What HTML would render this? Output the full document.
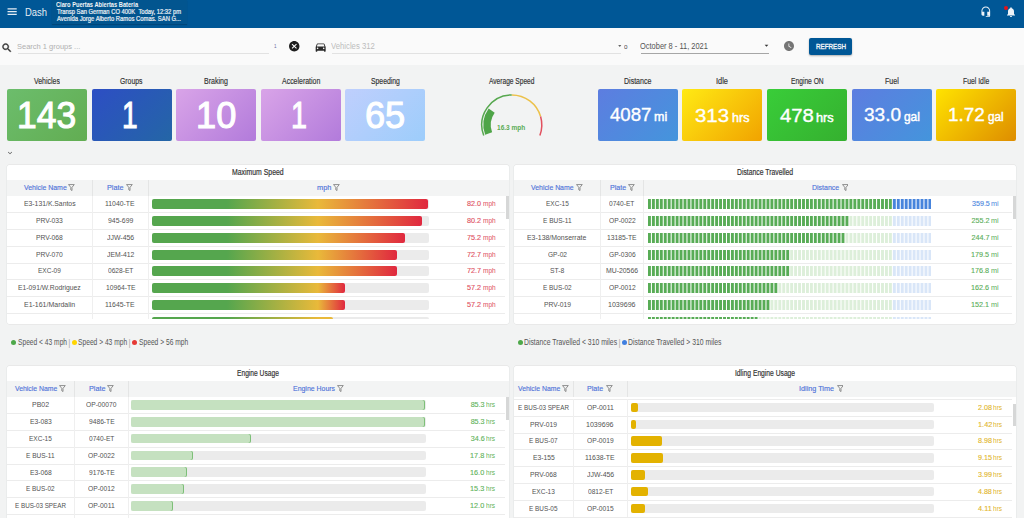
<!DOCTYPE html>
<html><head><meta charset="utf-8"><title>Dash</title>
<style>
html,body{margin:0;padding:0;}
body{width:1024px;height:518px;overflow:hidden;position:relative;background:#f2f3f3;font-family:"Liberation Sans", sans-serif;}
.t{position:absolute;white-space:nowrap;}
.panel{position:absolute;background:#fff;box-shadow:0 0 0.6px 0.4px #dfe0e0;border-radius:2px;overflow:hidden;}
.pa{position:absolute;}
</style></head><body>

<div style="position:absolute;left:0.00px;top:0.00px;width:1024.00px;height:27.60px;background:#005796;"></div>
<svg style="position:absolute;left:6.47px;top:5.1px;width:12.27px;height:13.2px;" viewBox="0 0 24 24" preserveAspectRatio="none"><path fill="#e4ecf3" d="M3 18h18v-2H3v2zm0-5h18v-2H3v2zm0-7v2h18V6H3z"/></svg>
<div class="t" style="left:24.54px;top:7.000px;font-size:10.7px;line-height:10.7px;color:#e4ecf3;transform:scaleX(0.8834);transform-origin:0 0;">Dash</div>
<div style="position:absolute;left:52.00px;top:0.00px;width:135.00px;height:24.20px;background:#02558f;box-shadow:0 1px 1px rgba(0,0,0,0.18);"></div>
<div class="t" style="left:56.47px;top:2.000px;font-size:6.9px;line-height:6.9px;color:#f2f5f8;font-weight:bold;transform:scaleX(0.8264);transform-origin:0 0;">Claro Puertas Abiertas Bateria</div>
<div class="t" style="left:56.58px;top:9.000px;font-size:6.6px;line-height:6.6px;color:#e8eef4;transform:scaleX(0.8839);transform-origin:0 0;-webkit-text-stroke:0.22px #e8eef4;">Transp San German CO 400K&nbsp;&nbsp;Today, 12:32 pm</div>
<div class="t" style="left:56.70px;top:16.000px;font-size:6.6px;line-height:6.6px;color:#e8eef4;transform:scaleX(0.8883);transform-origin:0 0;-webkit-text-stroke:0.22px #e8eef4;">Avenida Jorge Alberto Ramos Comas. SAN G...</div>
<svg style="position:absolute;left:979.80px;top:5.60px;width:11.60px;height:11.60px;" viewBox="0 0 24 24"><path fill="#eef3f8" d="M12 1c-4.97 0-9 4.03-9 9v7c0 1.66 1.34 3 3 3h3v-8H5v-2c0-3.87 3.13-7 7-7s7 3.13 7 7v2h-4v8h4v1h-7v2h6c1.66 0 3-1.34 3-3V10c0-4.97-4.03-9-9-9z"/></svg>
<svg style="position:absolute;left:1005.00px;top:5.90px;width:12.00px;height:12.00px;" viewBox="0 0 24 24"><path fill="#eef3f8" d="M12 22c1.1 0 2-.9 2-2h-4c0 1.1.89 2 2 2zm6-6v-5c0-3.07-1.64-5.64-4.5-6.32V4c0-.83-.67-1.5-1.5-1.5s-1.5.67-1.5 1.5v.68C7.63 5.36 6 7.92 6 11v5l-2 2v1h16v-1l-2-2z"/></svg>
<div style="position:absolute;left:1004.1px;top:5.7px;width:4.3px;height:4.3px;border-radius:50%;background:#e3131b;"></div>
<div style="position:absolute;left:0.00px;top:27.60px;width:1024.00px;height:37.20px;background:#fafafa;"></div>
<svg style="position:absolute;left:1.3px;top:42.0px;width:11.7px;height:11.7px;" viewBox="0 0 24 24"><path fill="#333" stroke="#333" stroke-width="0.9" d="M15.5 14h-.79l-.28-.27C15.41 12.59 16 11.11 16 9.5 16 5.91 13.09 3 9.5 3S3 5.91 3 9.5 5.91 16 9.5 16c1.61 0 3.09-.59 4.230-1.57l.27.28v.79l5 4.99L20.49 19l-4.99-5zm-6 0C7.01 14 5 11.99 5 9.5S7.01 5 9.5 5 14 7.01 14 9.5 11.99 14 9.5 14z"/></svg>
<div class="t" style="left:17.41px;top:43.000px;font-size:8.0px;line-height:8.0px;color:#b0b0b0;transform:scaleX(0.9364);transform-origin:0 0;">Search 1 groups ...</div>
<div style="position:absolute;left:17.75px;top:52.60px;width:251.00px;height:0.80px;background:#e2e2e2;"></div>
<div class="t" style="left:273.66px;top:44.000px;font-size:5.5px;line-height:5.5px;color:#6a6fa0;transform:scaleX(0.8359);transform-origin:0 0;">1</div>
<svg style="position:absolute;left:288.00px;top:40.00px;width:12.50px;height:12.50px;" viewBox="0 0 24 24"><path fill="#1e1e1e" d="M12 2C6.47 2 2 6.47 2 12s4.47 10 10 10 10-4.47 10-10S17.53 2 12 2zm5 13.59L15.59 17 12 13.41 8.41 17 7 15.59 10.59 12 7 8.41 8.41 7 12 10.59 15.59 7 17 8.41 13.41 12 17 15.59z"/></svg>
<svg style="position:absolute;left:314.3px;top:41.2px;width:13.33px;height:12.2px;" viewBox="0 0 24 24" preserveAspectRatio="none"><path fill="#2a2a2a" d="M18.92 6.01C18.72 5.42 18.16 5 17.5 5h-11c-.66 0-1.21.42-1.42 1.01L3 12v8c0 .55.45 1 1 1h1c.55 0 1-.45 1-1v-1h12v1c0 .55.45 1 1 1h1c.55 0 1-.45 1-1v-8l-2.08-5.99zM6.5 16c-.83 0-1.5-.67-1.5-1.5S5.67 13 6.5 13s1.5.67 1.5 1.5S7.33 16 6.5 16zm11 0c-.83 0-1.5-.67-1.5-1.5s.67-1.5 1.5-1.5 1.5.67 1.5 1.5-.67 1.5-1.5 1.5zM5 11l1.5-4.5h11L19 11H5z"/></svg>
<div class="t" style="left:331.46px;top:42.000px;font-size:8.4px;line-height:8.4px;color:#bdbdbd;transform:scaleX(0.9223);transform-origin:0 0;">Vehicles 312</div>
<div style="position:absolute;left:331.50px;top:52.60px;width:289.50px;height:0.80px;background:#e2e2e2;"></div>
<svg style="position:absolute;left:616.10px;top:41.90px;width:7.50px;height:7.50px;" viewBox="0 0 24 24"><path fill="#333" d="M7 10l5 5 5-5z"/></svg>
<div class="t" style="left:623.75px;top:44.000px;font-size:6.0px;line-height:6.0px;color:#444;transform:scaleX(1.0417);transform-origin:0 0;">0</div>
<div class="t" style="left:640.26px;top:42.000px;font-size:8.4px;line-height:8.4px;color:#555;transform:scaleX(0.8910);transform-origin:0 0;">October 8 - 11, 2021</div>
<div style="position:absolute;left:641.00px;top:52.50px;width:127.60px;height:1.30px;background:#a6a6a6;"></div>
<svg style="position:absolute;left:762.40px;top:41.25px;width:9.00px;height:9.00px;" viewBox="0 0 24 24"><path fill="#333" d="M7 10l5 5 5-5z"/></svg>
<svg style="position:absolute;left:783.00px;top:40.00px;width:12.00px;height:12.00px;" viewBox="0 0 24 24"><path fill="#757575" d="M12 2C6.5 2 2 6.5 2 12s4.5 10 10 10 10-4.5 10-10S17.5 2 12 2zm4.2 14.2L11 13V7h1.5v5.2l4.5 2.7-.8 1.3z"/></svg>
<div style="position:absolute;left:809.25px;top:37.75px;width:42.5px;height:17px;background:#005796;border-radius:2px;box-shadow:0 1px 2px rgba(0,0,0,0.3);"></div>
<div class="t" style="left:815.50px;top:43.000px;font-size:7.2px;line-height:7.2px;color:#f0f4f8;transform:scaleX(0.8728);transform-origin:0 0;-webkit-text-stroke:0.35px #f0f4f8;">REFRESH</div>
<div class="t" style="left:34.16px;top:77.000px;font-size:8.3px;line-height:8.3px;color:#333;transform:scaleX(0.8374);transform-origin:0 0;-webkit-text-stroke:0.16px #333;">Vehicles</div>
<div style="position:absolute;left:7.00px;top:88.6px;width:80.0px;height:52.6px;background:linear-gradient(135deg,#6cbd6c,#62ad52);border-radius:2px;"></div>
<div class="t" style="left:17.14px;top:97.000px;font-size:37.5px;line-height:37.5px;color:#ffffff;transform:scaleX(0.9445);transform-origin:0 0;-webkit-text-stroke:1.1px #fff;">143</div>
<div class="t" style="left:120.30px;top:77.000px;font-size:8.3px;line-height:8.3px;color:#333;transform:scaleX(0.8247);transform-origin:0 0;-webkit-text-stroke:0.16px #333;">Groups</div>
<div style="position:absolute;left:91.58px;top:88.6px;width:80.0px;height:52.6px;background:linear-gradient(135deg,#2d4ec4,#2466a6);border-radius:2px;"></div>
<div class="t" style="left:121.70px;top:97.000px;font-size:37.5px;line-height:37.5px;color:#ffffff;transform:scaleX(0.7479);transform-origin:0 0;-webkit-text-stroke:1.1px #fff;">1</div>
<div class="t" style="left:204.15px;top:77.000px;font-size:8.3px;line-height:8.3px;color:#333;transform:scaleX(0.8498);transform-origin:0 0;-webkit-text-stroke:0.16px #333;">Braking</div>
<div style="position:absolute;left:176.16px;top:88.6px;width:80.0px;height:52.6px;background:linear-gradient(135deg,#d9a4e8,#b27bdb);border-radius:2px;"></div>
<div class="t" style="left:195.59px;top:97.000px;font-size:37.5px;line-height:37.5px;color:#ffffff;transform:scaleX(0.9653);transform-origin:0 0;-webkit-text-stroke:1.1px #fff;">10</div>
<div class="t" style="left:281.81px;top:77.000px;font-size:8.3px;line-height:8.3px;color:#333;transform:scaleX(0.8393);transform-origin:0 0;-webkit-text-stroke:0.16px #333;">Acceleration</div>
<div style="position:absolute;left:260.74px;top:88.6px;width:80.0px;height:52.6px;background:linear-gradient(135deg,#d9a4e8,#b27bdb);border-radius:2px;"></div>
<div class="t" style="left:290.94px;top:97.000px;font-size:37.5px;line-height:37.5px;color:#ffffff;transform:scaleX(0.7663);transform-origin:0 0;-webkit-text-stroke:1.1px #fff;">1</div>
<div class="t" style="left:370.97px;top:77.000px;font-size:8.3px;line-height:8.3px;color:#333;transform:scaleX(0.8220);transform-origin:0 0;-webkit-text-stroke:0.16px #333;">Speeding</div>
<div style="position:absolute;left:345.32px;top:88.6px;width:80.0px;height:52.6px;background:linear-gradient(135deg,#bfcffd,#9dcdfb);border-radius:2px;"></div>
<div class="t" style="left:364.79px;top:97.000px;font-size:37.5px;line-height:37.5px;color:#ffffff;transform:scaleX(0.9647);transform-origin:0 0;-webkit-text-stroke:1.1px #fff;">65</div>
<div class="t" style="left:624.12px;top:77.000px;font-size:8.3px;line-height:8.3px;color:#333;transform:scaleX(0.8458);transform-origin:0 0;-webkit-text-stroke:0.16px #333;">Distance</div>
<div style="position:absolute;left:597.90px;top:88.6px;width:80.0px;height:52.6px;background:linear-gradient(135deg,#5d7de0,#4495dc);border-radius:2px;"></div>
<div class="t" style="left:610.03px;top:106.000px;font-size:18.5px;line-height:18.5px;color:#fff;transform:scaleX(1.0083);transform-origin:0 0;-webkit-text-stroke:0.35px #fff;">4087</div>
<div class="t" style="left:653.69px;top:111.000px;font-size:12.2px;line-height:12.2px;color:#fff;transform:scaleX(1.0235);transform-origin:0 0;-webkit-text-stroke:0.45px #fff;">mi</div>
<div class="t" style="left:716.35px;top:77.000px;font-size:8.3px;line-height:8.3px;color:#333;transform:scaleX(0.8920);transform-origin:0 0;-webkit-text-stroke:0.16px #333;">Idle</div>
<div style="position:absolute;left:682.48px;top:88.6px;width:80.0px;height:52.6px;background:linear-gradient(135deg,#ffea14,#f1a300);border-radius:2px;"></div>
<div class="t" style="left:695.38px;top:107.000px;font-size:18.5px;line-height:18.5px;color:#fff;transform:scaleX(1.1050);transform-origin:0 0;-webkit-text-stroke:0.35px #fff;">313</div>
<div class="t" style="left:731.82px;top:112.000px;font-size:12.2px;line-height:12.2px;color:#fff;transform:scaleX(1.0270);transform-origin:0 0;-webkit-text-stroke:0.45px #fff;">hrs</div>
<div class="t" style="left:790.71px;top:77.000px;font-size:8.3px;line-height:8.3px;color:#333;transform:scaleX(0.8057);transform-origin:0 0;-webkit-text-stroke:0.16px #333;">Engine ON</div>
<div style="position:absolute;left:767.06px;top:88.6px;width:80.0px;height:52.6px;background:linear-gradient(135deg,#39cd39,#35b02f);border-radius:2px;"></div>
<div class="t" style="left:780.39px;top:107.000px;font-size:18.5px;line-height:18.5px;color:#fff;transform:scaleX(1.0979);transform-origin:0 0;-webkit-text-stroke:0.35px #fff;">478</div>
<div class="t" style="left:816.01px;top:112.000px;font-size:12.2px;line-height:12.2px;color:#fff;transform:scaleX(1.0461);transform-origin:0 0;-webkit-text-stroke:0.45px #fff;">hrs</div>
<div class="t" style="left:884.70px;top:77.000px;font-size:8.3px;line-height:8.3px;color:#333;transform:scaleX(0.8532);transform-origin:0 0;-webkit-text-stroke:0.16px #333;">Fuel</div>
<div style="position:absolute;left:851.64px;top:88.6px;width:80.0px;height:52.6px;background:linear-gradient(135deg,#5d7de0,#4495dc);border-radius:2px;"></div>
<div class="t" style="left:863.84px;top:106.000px;font-size:18.5px;line-height:18.5px;color:#fff;transform:scaleX(1.0319);transform-origin:0 0;-webkit-text-stroke:0.35px #fff;">33.0</div>
<div class="t" style="left:904.02px;top:111.000px;font-size:12.2px;line-height:12.2px;color:#fff;transform:scaleX(0.9769);transform-origin:0 0;-webkit-text-stroke:0.45px #fff;">gal</div>
<div class="t" style="left:963.00px;top:77.000px;font-size:8.3px;line-height:8.3px;color:#333;transform:scaleX(0.8233);transform-origin:0 0;-webkit-text-stroke:0.16px #333;">Fuel Idle</div>
<div style="position:absolute;left:936.22px;top:88.6px;width:80.0px;height:52.6px;background:linear-gradient(135deg,#ffe300,#de8d00);border-radius:2px;"></div>
<div class="t" style="left:948.18px;top:106.000px;font-size:18.5px;line-height:18.5px;color:#fff;transform:scaleX(1.0217);transform-origin:0 0;-webkit-text-stroke:0.35px #fff;">1.72</div>
<div class="t" style="left:987.73px;top:111.000px;font-size:12.2px;line-height:12.2px;color:#fff;transform:scaleX(0.9635);transform-origin:0 0;-webkit-text-stroke:0.45px #fff;">gal</div>
<div class="t" style="left:489.00px;top:77.000px;font-size:8.3px;line-height:8.3px;color:#333;transform:scaleX(0.7961);transform-origin:0 0;-webkit-text-stroke:0.16px #333;">Average Speed</div>
<svg style="position:absolute;left:0;top:0;width:1024px;height:518px;" viewBox="0 0 1024 518"><path d="M483.74,135.50 A30.0,30.0 0 0 1 511.80,94.90" stroke="#57a84f" stroke-width="1.5" fill="none"/><path d="M511.80,94.90 A30.0,30.0 0 0 1 540.59,116.48" stroke="#ecc14a" stroke-width="1.5" fill="none"/><path d="M540.59,116.48 A30.0,30.0 0 0 1 539.86,135.50" stroke="#e2505e" stroke-width="1.5" fill="none"/><path d="M485.15,134.71 A28.4,28.4 0 0 1 488.68,108.41 L494.70,112.71 A21.0,21.0 0 0 0 492.09,132.15 Z" fill="#4fa548"/></svg>
<div class="t" style="left:497.11px;top:124.000px;font-size:7.0px;line-height:7.0px;color:#5aac55;font-weight:bold;transform:scaleX(0.9320);transform-origin:0 0;">16.3 mph</div>
<svg style="position:absolute;left:6.40px;top:148.50px;width:8.00px;height:8.00px;" viewBox="0 0 24 24"><path fill="#444" d="M16.59 8.59L12 13.17 7.41 8.59 6 10l6 6 6-6z"/></svg>
<div class="panel" style="left:7.20px;top:164.70px;width:501.80px;height:159.10px;">
<div class="t" style="left:225.05px;top:3.300px;font-size:8.3px;line-height:8.3px;color:#333;transform:scaleX(0.8289);transform-origin:0 0;-webkit-text-stroke:0.18px #333;">Maximum Speed</div><div style="position:absolute;left:0.00px;top:15.30px;width:501.80px;height:15.80px;background:#f3f4f4;"></div><div style="position:absolute;left:84.80px;top:15.30px;width:1.00px;height:15.80px;background:#e4e5e5;"></div><div style="position:absolute;left:140.70px;top:15.30px;width:1.00px;height:15.80px;background:#e4e5e5;"></div><div class="t" style="left:16.57px;top:19.300px;font-size:7.8px;line-height:7.8px;color:#4f73d9;transform:scaleX(0.8882);transform-origin:0 0;-webkit-text-stroke:0.15px #4f73d9;">Vehicle Name</div><svg class="pa" style="left:61.10px;top:19.60px;width:6.8px;height:7.2px;" viewBox="0 0 14 15"><path d="M1 1.2 H13 L8.3 7 V13.6 L5.7 12 V7 Z" fill="none" stroke="#7a7a7a" stroke-width="1.7" stroke-linejoin="round"/></svg><div class="t" style="left:100.22px;top:19.300px;font-size:7.8px;line-height:7.8px;color:#4f73d9;transform:scaleX(0.9281);transform-origin:0 0;-webkit-text-stroke:0.15px #4f73d9;">Plate</div><svg class="pa" style="left:118.80px;top:19.60px;width:6.8px;height:7.2px;" viewBox="0 0 14 15"><path d="M1 1.2 H13 L8.3 7 V13.6 L5.7 12 V7 Z" fill="none" stroke="#7a7a7a" stroke-width="1.7" stroke-linejoin="round"/></svg><div class="t" style="left:309.92px;top:19.300px;font-size:7.8px;line-height:7.8px;color:#4f73d9;transform:scaleX(0.9465);transform-origin:0 0;-webkit-text-stroke:0.15px #4f73d9;">mph</div><svg class="pa" style="left:326.10px;top:19.60px;width:6.8px;height:7.2px;" viewBox="0 0 14 15"><path d="M1 1.2 H13 L8.3 7 V13.6 L5.7 12 V7 Z" fill="none" stroke="#7a7a7a" stroke-width="1.7" stroke-linejoin="round"/></svg><div class="pa" style="left:0;top:31.100px;width:501.80px;height:123.200px;overflow:hidden;"><div style="position:absolute;left:0.00px;top:16.24px;width:497.80px;height:1.00px;background:#ececec;"></div><div style="position:absolute;left:84.80px;top:-0.10px;width:1.00px;height:16.84px;background:#efefef;"></div><div style="position:absolute;left:140.70px;top:-0.10px;width:1.00px;height:16.84px;background:#efefef;"></div><div class="t" style="left:16.70px;top:4.200px;font-size:7.6px;line-height:7.6px;color:#525252;transform:scaleX(0.8979);transform-origin:0 0;">E3-131/K.Santos</div><div class="t" style="left:98.31px;top:4.200px;font-size:7.6px;line-height:7.6px;color:#525252;transform:scaleX(0.9037);transform-origin:0 0;">11040-TE</div><div style="position:absolute;left:144.40px;top:3.20px;width:277.50px;height:10.00px;background:#ebebeb;border-radius:2px;"></div><div style="position:absolute;left:144.40px;top:3.20px;width:276.70px;height:10.00px;background:linear-gradient(to right,#55a64e 0px,#55a64e 75px,#e9b93a 166px,#e0283f 100%);border-radius:2px;"></div><div class="t" style="left:475.37px;top:5.200px;font-size:6.4px;line-height:6.4px;color:#e0505e;transform:scaleX(1.0247);transform-origin:0 0;">mph</div><div class="t" style="left:459.87px;top:4.200px;font-size:7.2px;line-height:7.2px;color:#e0505e;-webkit-text-stroke:0.12px #e0505e;">82.0</div><div style="position:absolute;left:0.00px;top:33.08px;width:497.80px;height:1.00px;background:#ececec;"></div><div style="position:absolute;left:84.80px;top:16.74px;width:1.00px;height:16.84px;background:#efefef;"></div><div style="position:absolute;left:140.70px;top:16.74px;width:1.00px;height:16.84px;background:#efefef;"></div><div class="t" style="left:29.06px;top:21.200px;font-size:7.6px;line-height:7.6px;color:#525252;transform:scaleX(0.8882);transform-origin:0 0;">PRV-033</div><div class="t" style="left:100.57px;top:21.200px;font-size:7.6px;line-height:7.6px;color:#525252;transform:scaleX(0.9094);transform-origin:0 0;">945-699</div><div style="position:absolute;left:144.40px;top:20.04px;width:277.50px;height:10.00px;background:#ebebeb;border-radius:2px;"></div><div style="position:absolute;left:144.40px;top:20.04px;width:270.63px;height:10.00px;background:linear-gradient(to right,#55a64e 0px,#55a64e 75px,#e9b93a 166px,#e0283f 100%);border-radius:2px;"></div><div class="t" style="left:475.37px;top:22.200px;font-size:6.4px;line-height:6.4px;color:#e0505e;transform:scaleX(1.0247);transform-origin:0 0;">mph</div><div class="t" style="left:459.87px;top:21.200px;font-size:7.2px;line-height:7.2px;color:#e0505e;transform:scaleX(1.0059);transform-origin:0 0;-webkit-text-stroke:0.12px #e0505e;">80.2</div><div style="position:absolute;left:0.00px;top:49.92px;width:497.80px;height:1.00px;background:#ececec;"></div><div style="position:absolute;left:84.80px;top:33.58px;width:1.00px;height:16.84px;background:#efefef;"></div><div style="position:absolute;left:140.70px;top:33.58px;width:1.00px;height:16.84px;background:#efefef;"></div><div class="t" style="left:29.06px;top:38.200px;font-size:7.6px;line-height:7.6px;color:#525252;transform:scaleX(0.8882);transform-origin:0 0;">PRV-068</div><div class="t" style="left:99.73px;top:38.200px;font-size:7.6px;line-height:7.6px;color:#525252;transform:scaleX(0.9120);transform-origin:0 0;">JJW-456</div><div style="position:absolute;left:144.40px;top:36.88px;width:277.50px;height:10.00px;background:#ebebeb;border-radius:2px;"></div><div style="position:absolute;left:144.40px;top:36.88px;width:253.75px;height:10.00px;background:linear-gradient(to right,#55a64e 0px,#55a64e 75px,#e9b93a 166px,#e0283f 100%);border-radius:2px;"></div><div class="t" style="left:475.37px;top:39.200px;font-size:6.4px;line-height:6.4px;color:#e0505e;transform:scaleX(1.0247);transform-origin:0 0;">mph</div><div class="t" style="left:459.83px;top:38.200px;font-size:7.2px;line-height:7.2px;color:#e0505e;transform:scaleX(1.0087);transform-origin:0 0;-webkit-text-stroke:0.12px #e0505e;">75.2</div><div style="position:absolute;left:0.00px;top:66.76px;width:497.80px;height:1.00px;background:#ececec;"></div><div style="position:absolute;left:84.80px;top:50.42px;width:1.00px;height:16.84px;background:#efefef;"></div><div style="position:absolute;left:140.70px;top:50.42px;width:1.00px;height:16.84px;background:#efefef;"></div><div class="t" style="left:29.07px;top:55.200px;font-size:7.6px;line-height:7.6px;color:#525252;transform:scaleX(0.8871);transform-origin:0 0;">PRV-070</div><div class="t" style="left:99.73px;top:55.200px;font-size:7.6px;line-height:7.6px;color:#525252;transform:scaleX(0.8974);transform-origin:0 0;">JEM-412</div><div style="position:absolute;left:144.40px;top:53.72px;width:277.50px;height:10.00px;background:#ebebeb;border-radius:2px;"></div><div style="position:absolute;left:144.40px;top:53.72px;width:245.32px;height:10.00px;background:linear-gradient(to right,#55a64e 0px,#55a64e 75px,#e9b93a 166px,#e0283f 100%);border-radius:2px;"></div><div class="t" style="left:475.37px;top:56.200px;font-size:6.4px;line-height:6.4px;color:#e0505e;transform:scaleX(1.0247);transform-origin:0 0;">mph</div><div class="t" style="left:459.83px;top:55.200px;font-size:7.2px;line-height:7.2px;color:#e0505e;transform:scaleX(1.0087);transform-origin:0 0;-webkit-text-stroke:0.12px #e0505e;">72.7</div><div style="position:absolute;left:0.00px;top:83.60px;width:497.80px;height:1.00px;background:#ececec;"></div><div style="position:absolute;left:84.80px;top:67.26px;width:1.00px;height:16.84px;background:#efefef;"></div><div style="position:absolute;left:140.70px;top:67.26px;width:1.00px;height:16.84px;background:#efefef;"></div><div class="t" style="left:31.12px;top:71.200px;font-size:7.6px;line-height:7.6px;color:#525252;transform:scaleX(0.8586);transform-origin:0 0;">EXC-09</div><div class="t" style="left:100.47px;top:71.200px;font-size:7.6px;line-height:7.6px;color:#525252;transform:scaleX(0.8724);transform-origin:0 0;">0628-ET</div><div style="position:absolute;left:144.40px;top:70.56px;width:277.50px;height:10.00px;background:#ebebeb;border-radius:2px;"></div><div style="position:absolute;left:144.40px;top:70.56px;width:245.32px;height:10.00px;background:linear-gradient(to right,#55a64e 0px,#55a64e 75px,#e9b93a 166px,#e0283f 100%);border-radius:2px;"></div><div class="t" style="left:475.37px;top:72.200px;font-size:6.4px;line-height:6.4px;color:#e0505e;transform:scaleX(1.0247);transform-origin:0 0;">mph</div><div class="t" style="left:459.83px;top:71.200px;font-size:7.2px;line-height:7.2px;color:#e0505e;transform:scaleX(1.0087);transform-origin:0 0;-webkit-text-stroke:0.12px #e0505e;">72.7</div><div style="position:absolute;left:0.00px;top:100.44px;width:497.80px;height:1.00px;background:#ececec;"></div><div style="position:absolute;left:84.80px;top:84.10px;width:1.00px;height:16.84px;background:#efefef;"></div><div style="position:absolute;left:140.70px;top:84.10px;width:1.00px;height:16.84px;background:#efefef;"></div><div class="t" style="left:11.18px;top:88.200px;font-size:7.6px;line-height:7.6px;color:#525252;transform:scaleX(0.8948);transform-origin:0 0;">E1-091/W.Rodriguez</div><div class="t" style="left:98.32px;top:88.200px;font-size:7.6px;line-height:7.6px;color:#525252;transform:scaleX(0.8879);transform-origin:0 0;">10964-TE</div><div style="position:absolute;left:144.40px;top:87.40px;width:277.50px;height:10.00px;background:#ebebeb;border-radius:2px;"></div><div style="position:absolute;left:144.40px;top:87.40px;width:193.02px;height:10.00px;background:linear-gradient(to right,#55a64e 0px,#55a64e 75px,#e9b93a 166px,#e0283f 100%);border-radius:2px;"></div><div class="t" style="left:475.37px;top:89.200px;font-size:6.4px;line-height:6.4px;color:#e0505e;transform:scaleX(1.0247);transform-origin:0 0;">mph</div><div class="t" style="left:459.91px;top:88.200px;font-size:7.2px;line-height:7.2px;color:#e0505e;transform:scaleX(1.0032);transform-origin:0 0;-webkit-text-stroke:0.12px #e0505e;">57.2</div><div style="position:absolute;left:0.00px;top:117.28px;width:497.80px;height:1.00px;background:#ececec;"></div><div style="position:absolute;left:84.80px;top:100.94px;width:1.00px;height:16.84px;background:#efefef;"></div><div style="position:absolute;left:140.70px;top:100.94px;width:1.00px;height:16.84px;background:#efefef;"></div><div class="t" style="left:16.98px;top:105.200px;font-size:7.6px;line-height:7.6px;color:#525252;transform:scaleX(0.9189);transform-origin:0 0;">E1-161/Mardalin</div><div class="t" style="left:98.31px;top:105.200px;font-size:7.6px;line-height:7.6px;color:#525252;transform:scaleX(0.9037);transform-origin:0 0;">11645-TE</div><div style="position:absolute;left:144.40px;top:104.24px;width:277.50px;height:10.00px;background:#ebebeb;border-radius:2px;"></div><div style="position:absolute;left:144.40px;top:104.24px;width:193.02px;height:10.00px;background:linear-gradient(to right,#55a64e 0px,#55a64e 75px,#e9b93a 166px,#e0283f 100%);border-radius:2px;"></div><div class="t" style="left:475.37px;top:106.200px;font-size:6.4px;line-height:6.4px;color:#e0505e;transform:scaleX(1.0247);transform-origin:0 0;">mph</div><div class="t" style="left:459.91px;top:105.200px;font-size:7.2px;line-height:7.2px;color:#e0505e;transform:scaleX(1.0032);transform-origin:0 0;-webkit-text-stroke:0.12px #e0505e;">57.2</div><div style="position:absolute;left:0.00px;top:134.12px;width:497.80px;height:1.00px;background:#ececec;"></div><div style="position:absolute;left:84.80px;top:117.78px;width:1.00px;height:16.84px;background:#efefef;"></div><div style="position:absolute;left:140.70px;top:117.78px;width:1.00px;height:16.84px;background:#efefef;"></div><div style="position:absolute;left:144.40px;top:121.08px;width:277.50px;height:10.00px;background:#ebebeb;border-radius:2px;"></div><div style="position:absolute;left:144.40px;top:121.08px;width:181.54px;height:10.00px;background:linear-gradient(to right,#55a64e 0px,#55a64e 75px,#e9b93a 166px,#e9b93a 100%);border-radius:2px;"></div></div><div style="position:absolute;left:498.80px;top:31.80px;width:2.70px;height:22.50px;background:#d6d7d7;"></div>
</div>
<div class="panel" style="left:513.90px;top:164.70px;width:502.10px;height:159.10px;">
<div class="t" style="left:223.35px;top:3.300px;font-size:8.3px;line-height:8.3px;color:#333;transform:scaleX(0.8216);transform-origin:0 0;-webkit-text-stroke:0.18px #333;">Distance Travelled</div><div style="position:absolute;left:0.00px;top:15.30px;width:502.10px;height:15.80px;background:#f3f4f4;"></div><div style="position:absolute;left:85.90px;top:15.30px;width:1.00px;height:15.80px;background:#e4e5e5;"></div><div style="position:absolute;left:129.60px;top:15.30px;width:1.00px;height:15.80px;background:#e4e5e5;"></div><div class="t" style="left:17.47px;top:19.300px;font-size:7.8px;line-height:7.8px;color:#4f73d9;transform:scaleX(0.8840);transform-origin:0 0;-webkit-text-stroke:0.15px #4f73d9;">Vehicle Name</div><svg class="pa" style="left:62.10px;top:19.60px;width:6.8px;height:7.2px;" viewBox="0 0 14 15"><path d="M1 1.2 H13 L8.3 7 V13.6 L5.7 12 V7 Z" fill="none" stroke="#7a7a7a" stroke-width="1.7" stroke-linejoin="round"/></svg><div class="t" style="left:95.73px;top:19.300px;font-size:7.8px;line-height:7.8px;color:#4f73d9;transform:scaleX(0.9102);transform-origin:0 0;-webkit-text-stroke:0.15px #4f73d9;">Plate</div><svg class="pa" style="left:114.10px;top:19.60px;width:6.8px;height:7.2px;" viewBox="0 0 14 15"><path d="M1 1.2 H13 L8.3 7 V13.6 L5.7 12 V7 Z" fill="none" stroke="#7a7a7a" stroke-width="1.7" stroke-linejoin="round"/></svg><div class="t" style="left:298.14px;top:19.300px;font-size:7.8px;line-height:7.8px;color:#4f73d9;transform:scaleX(0.8990);transform-origin:0 0;-webkit-text-stroke:0.15px #4f73d9;">Distance</div><svg class="pa" style="left:327.70px;top:19.60px;width:6.8px;height:7.2px;" viewBox="0 0 14 15"><path d="M1 1.2 H13 L8.3 7 V13.6 L5.7 12 V7 Z" fill="none" stroke="#7a7a7a" stroke-width="1.7" stroke-linejoin="round"/></svg><div class="pa" style="left:0;top:31.100px;width:502.10px;height:123.200px;overflow:hidden;"><div style="position:absolute;left:0.00px;top:16.24px;width:498.10px;height:1.00px;background:#ececec;"></div><div style="position:absolute;left:85.90px;top:-0.10px;width:1.00px;height:16.84px;background:#efefef;"></div><div style="position:absolute;left:129.60px;top:-0.10px;width:1.00px;height:16.84px;background:#efefef;"></div><div class="t" style="left:31.67px;top:4.200px;font-size:7.6px;line-height:7.6px;color:#525252;transform:scaleX(0.8574);transform-origin:0 0;">EXC-15</div><div class="t" style="left:95.47px;top:4.200px;font-size:7.6px;line-height:7.6px;color:#525252;transform:scaleX(0.8724);transform-origin:0 0;">0740-ET</div><svg class="pa" style="left:133.70px;top:3.20px;width:283.40px;height:10px;" viewBox="0 0 283.40 10"><rect x="0.00" y="0" width="2.9" height="10" fill="#58ac56"/><rect x="3.95" y="0" width="2.9" height="10" fill="#58ac56"/><rect x="7.90" y="0" width="2.9" height="10" fill="#58ac56"/><rect x="11.85" y="0" width="2.9" height="10" fill="#58ac56"/><rect x="15.80" y="0" width="2.9" height="10" fill="#58ac56"/><rect x="19.75" y="0" width="2.9" height="10" fill="#58ac56"/><rect x="23.70" y="0" width="2.9" height="10" fill="#58ac56"/><rect x="27.65" y="0" width="2.9" height="10" fill="#58ac56"/><rect x="31.60" y="0" width="2.9" height="10" fill="#58ac56"/><rect x="35.55" y="0" width="2.9" height="10" fill="#58ac56"/><rect x="39.50" y="0" width="2.9" height="10" fill="#58ac56"/><rect x="43.45" y="0" width="2.9" height="10" fill="#58ac56"/><rect x="47.40" y="0" width="2.9" height="10" fill="#58ac56"/><rect x="51.35" y="0" width="2.9" height="10" fill="#58ac56"/><rect x="55.30" y="0" width="2.9" height="10" fill="#58ac56"/><rect x="59.25" y="0" width="2.9" height="10" fill="#58ac56"/><rect x="63.20" y="0" width="2.9" height="10" fill="#58ac56"/><rect x="67.15" y="0" width="2.9" height="10" fill="#58ac56"/><rect x="71.10" y="0" width="2.9" height="10" fill="#58ac56"/><rect x="75.05" y="0" width="2.9" height="10" fill="#58ac56"/><rect x="79.00" y="0" width="2.9" height="10" fill="#58ac56"/><rect x="82.95" y="0" width="2.9" height="10" fill="#58ac56"/><rect x="86.90" y="0" width="2.9" height="10" fill="#58ac56"/><rect x="90.85" y="0" width="2.9" height="10" fill="#58ac56"/><rect x="94.80" y="0" width="2.9" height="10" fill="#58ac56"/><rect x="98.75" y="0" width="2.9" height="10" fill="#58ac56"/><rect x="102.70" y="0" width="2.9" height="10" fill="#58ac56"/><rect x="106.65" y="0" width="2.9" height="10" fill="#58ac56"/><rect x="110.60" y="0" width="2.9" height="10" fill="#58ac56"/><rect x="114.55" y="0" width="2.9" height="10" fill="#58ac56"/><rect x="118.50" y="0" width="2.9" height="10" fill="#58ac56"/><rect x="122.45" y="0" width="2.9" height="10" fill="#58ac56"/><rect x="126.40" y="0" width="2.9" height="10" fill="#58ac56"/><rect x="130.35" y="0" width="2.9" height="10" fill="#58ac56"/><rect x="134.30" y="0" width="2.9" height="10" fill="#58ac56"/><rect x="138.25" y="0" width="2.9" height="10" fill="#58ac56"/><rect x="142.20" y="0" width="2.9" height="10" fill="#58ac56"/><rect x="146.15" y="0" width="2.9" height="10" fill="#58ac56"/><rect x="150.10" y="0" width="2.9" height="10" fill="#58ac56"/><rect x="154.05" y="0" width="2.9" height="10" fill="#58ac56"/><rect x="158.00" y="0" width="2.9" height="10" fill="#58ac56"/><rect x="161.95" y="0" width="2.9" height="10" fill="#58ac56"/><rect x="165.90" y="0" width="2.9" height="10" fill="#58ac56"/><rect x="169.85" y="0" width="2.9" height="10" fill="#58ac56"/><rect x="173.80" y="0" width="2.9" height="10" fill="#58ac56"/><rect x="177.75" y="0" width="2.9" height="10" fill="#58ac56"/><rect x="181.70" y="0" width="2.9" height="10" fill="#58ac56"/><rect x="185.65" y="0" width="2.9" height="10" fill="#58ac56"/><rect x="189.60" y="0" width="2.9" height="10" fill="#58ac56"/><rect x="193.55" y="0" width="2.9" height="10" fill="#58ac56"/><rect x="197.50" y="0" width="2.9" height="10" fill="#58ac56"/><rect x="201.45" y="0" width="2.9" height="10" fill="#58ac56"/><rect x="205.40" y="0" width="2.9" height="10" fill="#58ac56"/><rect x="209.35" y="0" width="2.9" height="10" fill="#58ac56"/><rect x="213.30" y="0" width="2.9" height="10" fill="#58ac56"/><rect x="217.25" y="0" width="2.9" height="10" fill="#58ac56"/><rect x="221.20" y="0" width="2.9" height="10" fill="#58ac56"/><rect x="225.15" y="0" width="2.9" height="10" fill="#58ac56"/><rect x="229.10" y="0" width="2.9" height="10" fill="#58ac56"/><rect x="233.05" y="0" width="2.9" height="10" fill="#58ac56"/><rect x="237.00" y="0" width="2.9" height="10" fill="#58ac56"/><rect x="240.95" y="0" width="2.9" height="10" fill="#58ac56"/><rect x="244.90" y="0" width="2.9" height="10" fill="#4784dc"/><rect x="248.85" y="0" width="2.9" height="10" fill="#4784dc"/><rect x="252.80" y="0" width="2.9" height="10" fill="#4784dc"/><rect x="256.75" y="0" width="2.9" height="10" fill="#4784dc"/><rect x="260.70" y="0" width="2.9" height="10" fill="#4784dc"/><rect x="264.65" y="0" width="2.9" height="10" fill="#4784dc"/><rect x="268.60" y="0" width="2.9" height="10" fill="#4784dc"/><rect x="272.55" y="0" width="2.9" height="10" fill="#4784dc"/><rect x="276.50" y="0" width="2.9" height="10" fill="#4784dc"/><rect x="280.45" y="0" width="2.9" height="10" fill="#4784dc"/></svg><div class="t" style="left:476.94px;top:5.200px;font-size:6.4px;line-height:6.4px;color:#4a86de;transform:scaleX(1.1308);transform-origin:0 0;">mi</div><div class="t" style="left:457.65px;top:4.200px;font-size:7.2px;line-height:7.2px;color:#4a86de;transform:scaleX(0.9914);transform-origin:0 0;-webkit-text-stroke:0.12px #4a86de;">359.5</div><div style="position:absolute;left:0.00px;top:33.08px;width:498.10px;height:1.00px;background:#ececec;"></div><div style="position:absolute;left:85.90px;top:16.74px;width:1.00px;height:16.84px;background:#efefef;"></div><div style="position:absolute;left:129.60px;top:16.74px;width:1.00px;height:16.84px;background:#efefef;"></div><div class="t" style="left:28.83px;top:21.200px;font-size:7.6px;line-height:7.6px;color:#525252;transform:scaleX(0.8586);transform-origin:0 0;">E BUS-11</div><div class="t" style="left:94.91px;top:21.200px;font-size:7.6px;line-height:7.6px;color:#525252;transform:scaleX(0.8785);transform-origin:0 0;">OP-0022</div><svg class="pa" style="left:133.70px;top:20.04px;width:283.40px;height:10px;" viewBox="0 0 283.40 10"><rect x="0.00" y="0" width="2.9" height="10" fill="#58ac56"/><rect x="3.95" y="0" width="2.9" height="10" fill="#58ac56"/><rect x="7.90" y="0" width="2.9" height="10" fill="#58ac56"/><rect x="11.85" y="0" width="2.9" height="10" fill="#58ac56"/><rect x="15.80" y="0" width="2.9" height="10" fill="#58ac56"/><rect x="19.75" y="0" width="2.9" height="10" fill="#58ac56"/><rect x="23.70" y="0" width="2.9" height="10" fill="#58ac56"/><rect x="27.65" y="0" width="2.9" height="10" fill="#58ac56"/><rect x="31.60" y="0" width="2.9" height="10" fill="#58ac56"/><rect x="35.55" y="0" width="2.9" height="10" fill="#58ac56"/><rect x="39.50" y="0" width="2.9" height="10" fill="#58ac56"/><rect x="43.45" y="0" width="2.9" height="10" fill="#58ac56"/><rect x="47.40" y="0" width="2.9" height="10" fill="#58ac56"/><rect x="51.35" y="0" width="2.9" height="10" fill="#58ac56"/><rect x="55.30" y="0" width="2.9" height="10" fill="#58ac56"/><rect x="59.25" y="0" width="2.9" height="10" fill="#58ac56"/><rect x="63.20" y="0" width="2.9" height="10" fill="#58ac56"/><rect x="67.15" y="0" width="2.9" height="10" fill="#58ac56"/><rect x="71.10" y="0" width="2.9" height="10" fill="#58ac56"/><rect x="75.05" y="0" width="2.9" height="10" fill="#58ac56"/><rect x="79.00" y="0" width="2.9" height="10" fill="#58ac56"/><rect x="82.95" y="0" width="2.9" height="10" fill="#58ac56"/><rect x="86.90" y="0" width="2.9" height="10" fill="#58ac56"/><rect x="90.85" y="0" width="2.9" height="10" fill="#58ac56"/><rect x="94.80" y="0" width="2.9" height="10" fill="#58ac56"/><rect x="98.75" y="0" width="2.9" height="10" fill="#58ac56"/><rect x="102.70" y="0" width="2.9" height="10" fill="#58ac56"/><rect x="106.65" y="0" width="2.9" height="10" fill="#58ac56"/><rect x="110.60" y="0" width="2.9" height="10" fill="#58ac56"/><rect x="114.55" y="0" width="2.9" height="10" fill="#58ac56"/><rect x="118.50" y="0" width="2.9" height="10" fill="#58ac56"/><rect x="122.45" y="0" width="2.9" height="10" fill="#58ac56"/><rect x="126.40" y="0" width="2.9" height="10" fill="#58ac56"/><rect x="130.35" y="0" width="2.9" height="10" fill="#58ac56"/><rect x="134.30" y="0" width="2.9" height="10" fill="#58ac56"/><rect x="138.25" y="0" width="2.9" height="10" fill="#58ac56"/><rect x="142.20" y="0" width="2.9" height="10" fill="#58ac56"/><rect x="146.15" y="0" width="2.9" height="10" fill="#58ac56"/><rect x="150.10" y="0" width="2.9" height="10" fill="#58ac56"/><rect x="154.05" y="0" width="2.9" height="10" fill="#58ac56"/><rect x="158.00" y="0" width="2.9" height="10" fill="#58ac56"/><rect x="161.95" y="0" width="2.9" height="10" fill="#58ac56"/><rect x="165.90" y="0" width="2.9" height="10" fill="#58ac56"/><rect x="169.85" y="0" width="2.9" height="10" fill="#58ac56"/><rect x="173.80" y="0" width="2.9" height="10" fill="#58ac56"/><rect x="177.75" y="0" width="2.9" height="10" fill="#58ac56"/><rect x="181.70" y="0" width="2.9" height="10" fill="#58ac56"/><rect x="185.65" y="0" width="2.9" height="10" fill="#58ac56"/><rect x="189.60" y="0" width="2.9" height="10" fill="#58ac56"/><rect x="193.55" y="0" width="2.9" height="10" fill="#58ac56"/><rect x="197.50" y="0" width="2.9" height="10" fill="#58ac56"/><rect x="201.45" y="0" width="2.9" height="10" fill="#ddefda"/><rect x="205.40" y="0" width="2.9" height="10" fill="#ddefda"/><rect x="209.35" y="0" width="2.9" height="10" fill="#ddefda"/><rect x="213.30" y="0" width="2.9" height="10" fill="#ddefda"/><rect x="217.25" y="0" width="2.9" height="10" fill="#ddefda"/><rect x="221.20" y="0" width="2.9" height="10" fill="#ddefda"/><rect x="225.15" y="0" width="2.9" height="10" fill="#ddefda"/><rect x="229.10" y="0" width="2.9" height="10" fill="#ddefda"/><rect x="233.05" y="0" width="2.9" height="10" fill="#ddefda"/><rect x="237.00" y="0" width="2.9" height="10" fill="#ddefda"/><rect x="240.95" y="0" width="2.9" height="10" fill="#ddefda"/><rect x="244.90" y="0" width="2.9" height="10" fill="#d9e6f8"/><rect x="248.85" y="0" width="2.9" height="10" fill="#d9e6f8"/><rect x="252.80" y="0" width="2.9" height="10" fill="#d9e6f8"/><rect x="256.75" y="0" width="2.9" height="10" fill="#d9e6f8"/><rect x="260.70" y="0" width="2.9" height="10" fill="#d9e6f8"/><rect x="264.65" y="0" width="2.9" height="10" fill="#d9e6f8"/><rect x="268.60" y="0" width="2.9" height="10" fill="#d9e6f8"/><rect x="272.55" y="0" width="2.9" height="10" fill="#d9e6f8"/><rect x="276.50" y="0" width="2.9" height="10" fill="#d9e6f8"/><rect x="280.45" y="0" width="2.9" height="10" fill="#d9e6f8"/></svg><div class="t" style="left:476.94px;top:22.200px;font-size:6.4px;line-height:6.4px;color:#5aae58;transform:scaleX(1.1308);transform-origin:0 0;">mi</div><div class="t" style="left:457.57px;top:21.200px;font-size:7.2px;line-height:7.2px;color:#5aae58;-webkit-text-stroke:0.12px #5aae58;">255.2</div><div style="position:absolute;left:0.00px;top:49.92px;width:498.10px;height:1.00px;background:#ececec;"></div><div style="position:absolute;left:85.90px;top:33.58px;width:1.00px;height:16.84px;background:#efefef;"></div><div style="position:absolute;left:129.60px;top:33.58px;width:1.00px;height:16.84px;background:#efefef;"></div><div class="t" style="left:13.42px;top:38.200px;font-size:7.6px;line-height:7.6px;color:#525252;transform:scaleX(0.9119);transform-origin:0 0;">E3-138/Monserrate</div><div class="t" style="left:93.32px;top:38.200px;font-size:7.6px;line-height:7.6px;color:#525252;transform:scaleX(0.8879);transform-origin:0 0;">13185-TE</div><svg class="pa" style="left:133.70px;top:36.88px;width:283.40px;height:10px;" viewBox="0 0 283.40 10"><rect x="0.00" y="0" width="2.9" height="10" fill="#58ac56"/><rect x="3.95" y="0" width="2.9" height="10" fill="#58ac56"/><rect x="7.90" y="0" width="2.9" height="10" fill="#58ac56"/><rect x="11.85" y="0" width="2.9" height="10" fill="#58ac56"/><rect x="15.80" y="0" width="2.9" height="10" fill="#58ac56"/><rect x="19.75" y="0" width="2.9" height="10" fill="#58ac56"/><rect x="23.70" y="0" width="2.9" height="10" fill="#58ac56"/><rect x="27.65" y="0" width="2.9" height="10" fill="#58ac56"/><rect x="31.60" y="0" width="2.9" height="10" fill="#58ac56"/><rect x="35.55" y="0" width="2.9" height="10" fill="#58ac56"/><rect x="39.50" y="0" width="2.9" height="10" fill="#58ac56"/><rect x="43.45" y="0" width="2.9" height="10" fill="#58ac56"/><rect x="47.40" y="0" width="2.9" height="10" fill="#58ac56"/><rect x="51.35" y="0" width="2.9" height="10" fill="#58ac56"/><rect x="55.30" y="0" width="2.9" height="10" fill="#58ac56"/><rect x="59.25" y="0" width="2.9" height="10" fill="#58ac56"/><rect x="63.20" y="0" width="2.9" height="10" fill="#58ac56"/><rect x="67.15" y="0" width="2.9" height="10" fill="#58ac56"/><rect x="71.10" y="0" width="2.9" height="10" fill="#58ac56"/><rect x="75.05" y="0" width="2.9" height="10" fill="#58ac56"/><rect x="79.00" y="0" width="2.9" height="10" fill="#58ac56"/><rect x="82.95" y="0" width="2.9" height="10" fill="#58ac56"/><rect x="86.90" y="0" width="2.9" height="10" fill="#58ac56"/><rect x="90.85" y="0" width="2.9" height="10" fill="#58ac56"/><rect x="94.80" y="0" width="2.9" height="10" fill="#58ac56"/><rect x="98.75" y="0" width="2.9" height="10" fill="#58ac56"/><rect x="102.70" y="0" width="2.9" height="10" fill="#58ac56"/><rect x="106.65" y="0" width="2.9" height="10" fill="#58ac56"/><rect x="110.60" y="0" width="2.9" height="10" fill="#58ac56"/><rect x="114.55" y="0" width="2.9" height="10" fill="#58ac56"/><rect x="118.50" y="0" width="2.9" height="10" fill="#58ac56"/><rect x="122.45" y="0" width="2.9" height="10" fill="#58ac56"/><rect x="126.40" y="0" width="2.9" height="10" fill="#58ac56"/><rect x="130.35" y="0" width="2.9" height="10" fill="#58ac56"/><rect x="134.30" y="0" width="2.9" height="10" fill="#58ac56"/><rect x="138.25" y="0" width="2.9" height="10" fill="#58ac56"/><rect x="142.20" y="0" width="2.9" height="10" fill="#58ac56"/><rect x="146.15" y="0" width="2.9" height="10" fill="#58ac56"/><rect x="150.10" y="0" width="2.9" height="10" fill="#58ac56"/><rect x="154.05" y="0" width="2.9" height="10" fill="#58ac56"/><rect x="158.00" y="0" width="2.9" height="10" fill="#58ac56"/><rect x="161.95" y="0" width="2.9" height="10" fill="#58ac56"/><rect x="165.90" y="0" width="2.9" height="10" fill="#58ac56"/><rect x="169.85" y="0" width="2.9" height="10" fill="#58ac56"/><rect x="173.80" y="0" width="2.9" height="10" fill="#58ac56"/><rect x="177.75" y="0" width="2.9" height="10" fill="#58ac56"/><rect x="181.70" y="0" width="2.9" height="10" fill="#58ac56"/><rect x="185.65" y="0" width="2.9" height="10" fill="#58ac56"/><rect x="189.60" y="0" width="2.9" height="10" fill="#58ac56"/><rect x="193.55" y="0" width="2.9" height="10" fill="#58ac56"/><rect x="197.50" y="0" width="2.9" height="10" fill="#ddefda"/><rect x="201.45" y="0" width="2.9" height="10" fill="#ddefda"/><rect x="205.40" y="0" width="2.9" height="10" fill="#ddefda"/><rect x="209.35" y="0" width="2.9" height="10" fill="#ddefda"/><rect x="213.30" y="0" width="2.9" height="10" fill="#ddefda"/><rect x="217.25" y="0" width="2.9" height="10" fill="#ddefda"/><rect x="221.20" y="0" width="2.9" height="10" fill="#ddefda"/><rect x="225.15" y="0" width="2.9" height="10" fill="#ddefda"/><rect x="229.10" y="0" width="2.9" height="10" fill="#ddefda"/><rect x="233.05" y="0" width="2.9" height="10" fill="#ddefda"/><rect x="237.00" y="0" width="2.9" height="10" fill="#ddefda"/><rect x="240.95" y="0" width="2.9" height="10" fill="#ddefda"/><rect x="244.90" y="0" width="2.9" height="10" fill="#d9e6f8"/><rect x="248.85" y="0" width="2.9" height="10" fill="#d9e6f8"/><rect x="252.80" y="0" width="2.9" height="10" fill="#d9e6f8"/><rect x="256.75" y="0" width="2.9" height="10" fill="#d9e6f8"/><rect x="260.70" y="0" width="2.9" height="10" fill="#d9e6f8"/><rect x="264.65" y="0" width="2.9" height="10" fill="#d9e6f8"/><rect x="268.60" y="0" width="2.9" height="10" fill="#d9e6f8"/><rect x="272.55" y="0" width="2.9" height="10" fill="#d9e6f8"/><rect x="276.50" y="0" width="2.9" height="10" fill="#d9e6f8"/><rect x="280.45" y="0" width="2.9" height="10" fill="#d9e6f8"/></svg><div class="t" style="left:476.94px;top:39.200px;font-size:6.4px;line-height:6.4px;color:#5aae58;transform:scaleX(1.1308);transform-origin:0 0;">mi</div><div class="t" style="left:457.57px;top:38.200px;font-size:7.2px;line-height:7.2px;color:#5aae58;-webkit-text-stroke:0.12px #5aae58;">244.7</div><div style="position:absolute;left:0.00px;top:66.76px;width:498.10px;height:1.00px;background:#ececec;"></div><div style="position:absolute;left:85.90px;top:50.42px;width:1.00px;height:16.84px;background:#efefef;"></div><div style="position:absolute;left:129.60px;top:50.42px;width:1.00px;height:16.84px;background:#efefef;"></div><div class="t" style="left:33.67px;top:55.200px;font-size:7.6px;line-height:7.6px;color:#525252;transform:scaleX(0.8673);transform-origin:0 0;">GP-02</div><div class="t" style="left:94.90px;top:55.200px;font-size:7.6px;line-height:7.6px;color:#525252;transform:scaleX(0.8759);transform-origin:0 0;">GP-0306</div><svg class="pa" style="left:133.70px;top:53.72px;width:283.40px;height:10px;" viewBox="0 0 283.40 10"><rect x="0.00" y="0" width="2.9" height="10" fill="#58ac56"/><rect x="3.95" y="0" width="2.9" height="10" fill="#58ac56"/><rect x="7.90" y="0" width="2.9" height="10" fill="#58ac56"/><rect x="11.85" y="0" width="2.9" height="10" fill="#58ac56"/><rect x="15.80" y="0" width="2.9" height="10" fill="#58ac56"/><rect x="19.75" y="0" width="2.9" height="10" fill="#58ac56"/><rect x="23.70" y="0" width="2.9" height="10" fill="#58ac56"/><rect x="27.65" y="0" width="2.9" height="10" fill="#58ac56"/><rect x="31.60" y="0" width="2.9" height="10" fill="#58ac56"/><rect x="35.55" y="0" width="2.9" height="10" fill="#58ac56"/><rect x="39.50" y="0" width="2.9" height="10" fill="#58ac56"/><rect x="43.45" y="0" width="2.9" height="10" fill="#58ac56"/><rect x="47.40" y="0" width="2.9" height="10" fill="#58ac56"/><rect x="51.35" y="0" width="2.9" height="10" fill="#58ac56"/><rect x="55.30" y="0" width="2.9" height="10" fill="#58ac56"/><rect x="59.25" y="0" width="2.9" height="10" fill="#58ac56"/><rect x="63.20" y="0" width="2.9" height="10" fill="#58ac56"/><rect x="67.15" y="0" width="2.9" height="10" fill="#58ac56"/><rect x="71.10" y="0" width="2.9" height="10" fill="#58ac56"/><rect x="75.05" y="0" width="2.9" height="10" fill="#58ac56"/><rect x="79.00" y="0" width="2.9" height="10" fill="#58ac56"/><rect x="82.95" y="0" width="2.9" height="10" fill="#58ac56"/><rect x="86.90" y="0" width="2.9" height="10" fill="#58ac56"/><rect x="90.85" y="0" width="2.9" height="10" fill="#58ac56"/><rect x="94.80" y="0" width="2.9" height="10" fill="#58ac56"/><rect x="98.75" y="0" width="2.9" height="10" fill="#58ac56"/><rect x="102.70" y="0" width="2.9" height="10" fill="#58ac56"/><rect x="106.65" y="0" width="2.9" height="10" fill="#58ac56"/><rect x="110.60" y="0" width="2.9" height="10" fill="#58ac56"/><rect x="114.55" y="0" width="2.9" height="10" fill="#58ac56"/><rect x="118.50" y="0" width="2.9" height="10" fill="#58ac56"/><rect x="122.45" y="0" width="2.9" height="10" fill="#58ac56"/><rect x="126.40" y="0" width="2.9" height="10" fill="#58ac56"/><rect x="130.35" y="0" width="2.9" height="10" fill="#58ac56"/><rect x="134.30" y="0" width="2.9" height="10" fill="#58ac56"/><rect x="138.25" y="0" width="2.9" height="10" fill="#58ac56"/><rect x="142.20" y="0" width="2.9" height="10" fill="#ddefda"/><rect x="146.15" y="0" width="2.9" height="10" fill="#ddefda"/><rect x="150.10" y="0" width="2.9" height="10" fill="#ddefda"/><rect x="154.05" y="0" width="2.9" height="10" fill="#ddefda"/><rect x="158.00" y="0" width="2.9" height="10" fill="#ddefda"/><rect x="161.95" y="0" width="2.9" height="10" fill="#ddefda"/><rect x="165.90" y="0" width="2.9" height="10" fill="#ddefda"/><rect x="169.85" y="0" width="2.9" height="10" fill="#ddefda"/><rect x="173.80" y="0" width="2.9" height="10" fill="#ddefda"/><rect x="177.75" y="0" width="2.9" height="10" fill="#ddefda"/><rect x="181.70" y="0" width="2.9" height="10" fill="#ddefda"/><rect x="185.65" y="0" width="2.9" height="10" fill="#ddefda"/><rect x="189.60" y="0" width="2.9" height="10" fill="#ddefda"/><rect x="193.55" y="0" width="2.9" height="10" fill="#ddefda"/><rect x="197.50" y="0" width="2.9" height="10" fill="#ddefda"/><rect x="201.45" y="0" width="2.9" height="10" fill="#ddefda"/><rect x="205.40" y="0" width="2.9" height="10" fill="#ddefda"/><rect x="209.35" y="0" width="2.9" height="10" fill="#ddefda"/><rect x="213.30" y="0" width="2.9" height="10" fill="#ddefda"/><rect x="217.25" y="0" width="2.9" height="10" fill="#ddefda"/><rect x="221.20" y="0" width="2.9" height="10" fill="#ddefda"/><rect x="225.15" y="0" width="2.9" height="10" fill="#ddefda"/><rect x="229.10" y="0" width="2.9" height="10" fill="#ddefda"/><rect x="233.05" y="0" width="2.9" height="10" fill="#ddefda"/><rect x="237.00" y="0" width="2.9" height="10" fill="#ddefda"/><rect x="240.95" y="0" width="2.9" height="10" fill="#ddefda"/><rect x="244.90" y="0" width="2.9" height="10" fill="#d9e6f8"/><rect x="248.85" y="0" width="2.9" height="10" fill="#d9e6f8"/><rect x="252.80" y="0" width="2.9" height="10" fill="#d9e6f8"/><rect x="256.75" y="0" width="2.9" height="10" fill="#d9e6f8"/><rect x="260.70" y="0" width="2.9" height="10" fill="#d9e6f8"/><rect x="264.65" y="0" width="2.9" height="10" fill="#d9e6f8"/><rect x="268.60" y="0" width="2.9" height="10" fill="#d9e6f8"/><rect x="272.55" y="0" width="2.9" height="10" fill="#d9e6f8"/><rect x="276.50" y="0" width="2.9" height="10" fill="#d9e6f8"/><rect x="280.45" y="0" width="2.9" height="10" fill="#d9e6f8"/></svg><div class="t" style="left:476.94px;top:56.200px;font-size:6.4px;line-height:6.4px;color:#5aae58;transform:scaleX(1.1308);transform-origin:0 0;">mi</div><div class="t" style="left:457.39px;top:55.200px;font-size:7.2px;line-height:7.2px;color:#5aae58;transform:scaleX(1.0059);transform-origin:0 0;-webkit-text-stroke:0.12px #5aae58;">179.5</div><div style="position:absolute;left:0.00px;top:83.60px;width:498.10px;height:1.00px;background:#ececec;"></div><div style="position:absolute;left:85.90px;top:67.26px;width:1.00px;height:16.84px;background:#efefef;"></div><div style="position:absolute;left:129.60px;top:67.26px;width:1.00px;height:16.84px;background:#efefef;"></div><div class="t" style="left:36.02px;top:71.200px;font-size:7.6px;line-height:7.6px;color:#525252;transform:scaleX(0.8934);transform-origin:0 0;">ST-8</div><div class="t" style="left:92.07px;top:71.200px;font-size:7.6px;line-height:7.6px;color:#525252;transform:scaleX(0.9042);transform-origin:0 0;">MU-20566</div><svg class="pa" style="left:133.70px;top:70.56px;width:283.40px;height:10px;" viewBox="0 0 283.40 10"><rect x="0.00" y="0" width="2.9" height="10" fill="#58ac56"/><rect x="3.95" y="0" width="2.9" height="10" fill="#58ac56"/><rect x="7.90" y="0" width="2.9" height="10" fill="#58ac56"/><rect x="11.85" y="0" width="2.9" height="10" fill="#58ac56"/><rect x="15.80" y="0" width="2.9" height="10" fill="#58ac56"/><rect x="19.75" y="0" width="2.9" height="10" fill="#58ac56"/><rect x="23.70" y="0" width="2.9" height="10" fill="#58ac56"/><rect x="27.65" y="0" width="2.9" height="10" fill="#58ac56"/><rect x="31.60" y="0" width="2.9" height="10" fill="#58ac56"/><rect x="35.55" y="0" width="2.9" height="10" fill="#58ac56"/><rect x="39.50" y="0" width="2.9" height="10" fill="#58ac56"/><rect x="43.45" y="0" width="2.9" height="10" fill="#58ac56"/><rect x="47.40" y="0" width="2.9" height="10" fill="#58ac56"/><rect x="51.35" y="0" width="2.9" height="10" fill="#58ac56"/><rect x="55.30" y="0" width="2.9" height="10" fill="#58ac56"/><rect x="59.25" y="0" width="2.9" height="10" fill="#58ac56"/><rect x="63.20" y="0" width="2.9" height="10" fill="#58ac56"/><rect x="67.15" y="0" width="2.9" height="10" fill="#58ac56"/><rect x="71.10" y="0" width="2.9" height="10" fill="#58ac56"/><rect x="75.05" y="0" width="2.9" height="10" fill="#58ac56"/><rect x="79.00" y="0" width="2.9" height="10" fill="#58ac56"/><rect x="82.95" y="0" width="2.9" height="10" fill="#58ac56"/><rect x="86.90" y="0" width="2.9" height="10" fill="#58ac56"/><rect x="90.85" y="0" width="2.9" height="10" fill="#58ac56"/><rect x="94.80" y="0" width="2.9" height="10" fill="#58ac56"/><rect x="98.75" y="0" width="2.9" height="10" fill="#58ac56"/><rect x="102.70" y="0" width="2.9" height="10" fill="#58ac56"/><rect x="106.65" y="0" width="2.9" height="10" fill="#58ac56"/><rect x="110.60" y="0" width="2.9" height="10" fill="#58ac56"/><rect x="114.55" y="0" width="2.9" height="10" fill="#58ac56"/><rect x="118.50" y="0" width="2.9" height="10" fill="#58ac56"/><rect x="122.45" y="0" width="2.9" height="10" fill="#58ac56"/><rect x="126.40" y="0" width="2.9" height="10" fill="#58ac56"/><rect x="130.35" y="0" width="2.9" height="10" fill="#58ac56"/><rect x="134.30" y="0" width="2.9" height="10" fill="#58ac56"/><rect x="138.25" y="0" width="2.9" height="10" fill="#58ac56"/><rect x="142.20" y="0" width="2.9" height="10" fill="#ddefda"/><rect x="146.15" y="0" width="2.9" height="10" fill="#ddefda"/><rect x="150.10" y="0" width="2.9" height="10" fill="#ddefda"/><rect x="154.05" y="0" width="2.9" height="10" fill="#ddefda"/><rect x="158.00" y="0" width="2.9" height="10" fill="#ddefda"/><rect x="161.95" y="0" width="2.9" height="10" fill="#ddefda"/><rect x="165.90" y="0" width="2.9" height="10" fill="#ddefda"/><rect x="169.85" y="0" width="2.9" height="10" fill="#ddefda"/><rect x="173.80" y="0" width="2.9" height="10" fill="#ddefda"/><rect x="177.75" y="0" width="2.9" height="10" fill="#ddefda"/><rect x="181.70" y="0" width="2.9" height="10" fill="#ddefda"/><rect x="185.65" y="0" width="2.9" height="10" fill="#ddefda"/><rect x="189.60" y="0" width="2.9" height="10" fill="#ddefda"/><rect x="193.55" y="0" width="2.9" height="10" fill="#ddefda"/><rect x="197.50" y="0" width="2.9" height="10" fill="#ddefda"/><rect x="201.45" y="0" width="2.9" height="10" fill="#ddefda"/><rect x="205.40" y="0" width="2.9" height="10" fill="#ddefda"/><rect x="209.35" y="0" width="2.9" height="10" fill="#ddefda"/><rect x="213.30" y="0" width="2.9" height="10" fill="#ddefda"/><rect x="217.25" y="0" width="2.9" height="10" fill="#ddefda"/><rect x="221.20" y="0" width="2.9" height="10" fill="#ddefda"/><rect x="225.15" y="0" width="2.9" height="10" fill="#ddefda"/><rect x="229.10" y="0" width="2.9" height="10" fill="#ddefda"/><rect x="233.05" y="0" width="2.9" height="10" fill="#ddefda"/><rect x="237.00" y="0" width="2.9" height="10" fill="#ddefda"/><rect x="240.95" y="0" width="2.9" height="10" fill="#ddefda"/><rect x="244.90" y="0" width="2.9" height="10" fill="#d9e6f8"/><rect x="248.85" y="0" width="2.9" height="10" fill="#d9e6f8"/><rect x="252.80" y="0" width="2.9" height="10" fill="#d9e6f8"/><rect x="256.75" y="0" width="2.9" height="10" fill="#d9e6f8"/><rect x="260.70" y="0" width="2.9" height="10" fill="#d9e6f8"/><rect x="264.65" y="0" width="2.9" height="10" fill="#d9e6f8"/><rect x="268.60" y="0" width="2.9" height="10" fill="#d9e6f8"/><rect x="272.55" y="0" width="2.9" height="10" fill="#d9e6f8"/><rect x="276.50" y="0" width="2.9" height="10" fill="#d9e6f8"/><rect x="280.45" y="0" width="2.9" height="10" fill="#d9e6f8"/></svg><div class="t" style="left:476.94px;top:72.200px;font-size:6.4px;line-height:6.4px;color:#5aae58;transform:scaleX(1.1308);transform-origin:0 0;">mi</div><div class="t" style="left:457.39px;top:71.200px;font-size:7.2px;line-height:7.2px;color:#5aae58;transform:scaleX(1.0059);transform-origin:0 0;-webkit-text-stroke:0.12px #5aae58;">176.8</div><div style="position:absolute;left:0.00px;top:100.44px;width:498.10px;height:1.00px;background:#ececec;"></div><div style="position:absolute;left:85.90px;top:84.10px;width:1.00px;height:16.84px;background:#efefef;"></div><div style="position:absolute;left:129.60px;top:84.10px;width:1.00px;height:16.84px;background:#efefef;"></div><div class="t" style="left:28.84px;top:88.200px;font-size:7.6px;line-height:7.6px;color:#525252;transform:scaleX(0.8447);transform-origin:0 0;">E BUS-02</div><div class="t" style="left:94.91px;top:88.200px;font-size:7.6px;line-height:7.6px;color:#525252;transform:scaleX(0.8785);transform-origin:0 0;">OP-0012</div><svg class="pa" style="left:133.70px;top:87.40px;width:283.40px;height:10px;" viewBox="0 0 283.40 10"><rect x="0.00" y="0" width="2.9" height="10" fill="#58ac56"/><rect x="3.95" y="0" width="2.9" height="10" fill="#58ac56"/><rect x="7.90" y="0" width="2.9" height="10" fill="#58ac56"/><rect x="11.85" y="0" width="2.9" height="10" fill="#58ac56"/><rect x="15.80" y="0" width="2.9" height="10" fill="#58ac56"/><rect x="19.75" y="0" width="2.9" height="10" fill="#58ac56"/><rect x="23.70" y="0" width="2.9" height="10" fill="#58ac56"/><rect x="27.65" y="0" width="2.9" height="10" fill="#58ac56"/><rect x="31.60" y="0" width="2.9" height="10" fill="#58ac56"/><rect x="35.55" y="0" width="2.9" height="10" fill="#58ac56"/><rect x="39.50" y="0" width="2.9" height="10" fill="#58ac56"/><rect x="43.45" y="0" width="2.9" height="10" fill="#58ac56"/><rect x="47.40" y="0" width="2.9" height="10" fill="#58ac56"/><rect x="51.35" y="0" width="2.9" height="10" fill="#58ac56"/><rect x="55.30" y="0" width="2.9" height="10" fill="#58ac56"/><rect x="59.25" y="0" width="2.9" height="10" fill="#58ac56"/><rect x="63.20" y="0" width="2.9" height="10" fill="#58ac56"/><rect x="67.15" y="0" width="2.9" height="10" fill="#58ac56"/><rect x="71.10" y="0" width="2.9" height="10" fill="#58ac56"/><rect x="75.05" y="0" width="2.9" height="10" fill="#58ac56"/><rect x="79.00" y="0" width="2.9" height="10" fill="#58ac56"/><rect x="82.95" y="0" width="2.9" height="10" fill="#58ac56"/><rect x="86.90" y="0" width="2.9" height="10" fill="#58ac56"/><rect x="90.85" y="0" width="2.9" height="10" fill="#58ac56"/><rect x="94.80" y="0" width="2.9" height="10" fill="#58ac56"/><rect x="98.75" y="0" width="2.9" height="10" fill="#58ac56"/><rect x="102.70" y="0" width="2.9" height="10" fill="#58ac56"/><rect x="106.65" y="0" width="2.9" height="10" fill="#58ac56"/><rect x="110.60" y="0" width="2.9" height="10" fill="#58ac56"/><rect x="114.55" y="0" width="2.9" height="10" fill="#58ac56"/><rect x="118.50" y="0" width="2.9" height="10" fill="#58ac56"/><rect x="122.45" y="0" width="2.9" height="10" fill="#58ac56"/><rect x="126.40" y="0" width="2.9" height="10" fill="#58ac56"/><rect x="130.35" y="0" width="2.9" height="10" fill="#ddefda"/><rect x="134.30" y="0" width="2.9" height="10" fill="#ddefda"/><rect x="138.25" y="0" width="2.9" height="10" fill="#ddefda"/><rect x="142.20" y="0" width="2.9" height="10" fill="#ddefda"/><rect x="146.15" y="0" width="2.9" height="10" fill="#ddefda"/><rect x="150.10" y="0" width="2.9" height="10" fill="#ddefda"/><rect x="154.05" y="0" width="2.9" height="10" fill="#ddefda"/><rect x="158.00" y="0" width="2.9" height="10" fill="#ddefda"/><rect x="161.95" y="0" width="2.9" height="10" fill="#ddefda"/><rect x="165.90" y="0" width="2.9" height="10" fill="#ddefda"/><rect x="169.85" y="0" width="2.9" height="10" fill="#ddefda"/><rect x="173.80" y="0" width="2.9" height="10" fill="#ddefda"/><rect x="177.75" y="0" width="2.9" height="10" fill="#ddefda"/><rect x="181.70" y="0" width="2.9" height="10" fill="#ddefda"/><rect x="185.65" y="0" width="2.9" height="10" fill="#ddefda"/><rect x="189.60" y="0" width="2.9" height="10" fill="#ddefda"/><rect x="193.55" y="0" width="2.9" height="10" fill="#ddefda"/><rect x="197.50" y="0" width="2.9" height="10" fill="#ddefda"/><rect x="201.45" y="0" width="2.9" height="10" fill="#ddefda"/><rect x="205.40" y="0" width="2.9" height="10" fill="#ddefda"/><rect x="209.35" y="0" width="2.9" height="10" fill="#ddefda"/><rect x="213.30" y="0" width="2.9" height="10" fill="#ddefda"/><rect x="217.25" y="0" width="2.9" height="10" fill="#ddefda"/><rect x="221.20" y="0" width="2.9" height="10" fill="#ddefda"/><rect x="225.15" y="0" width="2.9" height="10" fill="#ddefda"/><rect x="229.10" y="0" width="2.9" height="10" fill="#ddefda"/><rect x="233.05" y="0" width="2.9" height="10" fill="#ddefda"/><rect x="237.00" y="0" width="2.9" height="10" fill="#ddefda"/><rect x="240.95" y="0" width="2.9" height="10" fill="#ddefda"/><rect x="244.90" y="0" width="2.9" height="10" fill="#d9e6f8"/><rect x="248.85" y="0" width="2.9" height="10" fill="#d9e6f8"/><rect x="252.80" y="0" width="2.9" height="10" fill="#d9e6f8"/><rect x="256.75" y="0" width="2.9" height="10" fill="#d9e6f8"/><rect x="260.70" y="0" width="2.9" height="10" fill="#d9e6f8"/><rect x="264.65" y="0" width="2.9" height="10" fill="#d9e6f8"/><rect x="268.60" y="0" width="2.9" height="10" fill="#d9e6f8"/><rect x="272.55" y="0" width="2.9" height="10" fill="#d9e6f8"/><rect x="276.50" y="0" width="2.9" height="10" fill="#d9e6f8"/><rect x="280.45" y="0" width="2.9" height="10" fill="#d9e6f8"/></svg><div class="t" style="left:476.94px;top:89.200px;font-size:6.4px;line-height:6.4px;color:#5aae58;transform:scaleX(1.1308);transform-origin:0 0;">mi</div><div class="t" style="left:457.39px;top:88.200px;font-size:7.2px;line-height:7.2px;color:#5aae58;transform:scaleX(1.0059);transform-origin:0 0;-webkit-text-stroke:0.12px #5aae58;">162.6</div><div style="position:absolute;left:0.00px;top:117.28px;width:498.10px;height:1.00px;background:#ececec;"></div><div style="position:absolute;left:85.90px;top:100.94px;width:1.00px;height:16.84px;background:#efefef;"></div><div style="position:absolute;left:129.60px;top:100.94px;width:1.00px;height:16.84px;background:#efefef;"></div><div class="t" style="left:29.61px;top:105.200px;font-size:7.6px;line-height:7.6px;color:#525252;transform:scaleX(0.8894);transform-origin:0 0;">PRV-019</div><div class="t" style="left:94.35px;top:105.200px;font-size:7.6px;line-height:7.6px;color:#525252;transform:scaleX(0.9316);transform-origin:0 0;">1039696</div><svg class="pa" style="left:133.70px;top:104.24px;width:283.40px;height:10px;" viewBox="0 0 283.40 10"><rect x="0.00" y="0" width="2.9" height="10" fill="#58ac56"/><rect x="3.95" y="0" width="2.9" height="10" fill="#58ac56"/><rect x="7.90" y="0" width="2.9" height="10" fill="#58ac56"/><rect x="11.85" y="0" width="2.9" height="10" fill="#58ac56"/><rect x="15.80" y="0" width="2.9" height="10" fill="#58ac56"/><rect x="19.75" y="0" width="2.9" height="10" fill="#58ac56"/><rect x="23.70" y="0" width="2.9" height="10" fill="#58ac56"/><rect x="27.65" y="0" width="2.9" height="10" fill="#58ac56"/><rect x="31.60" y="0" width="2.9" height="10" fill="#58ac56"/><rect x="35.55" y="0" width="2.9" height="10" fill="#58ac56"/><rect x="39.50" y="0" width="2.9" height="10" fill="#58ac56"/><rect x="43.45" y="0" width="2.9" height="10" fill="#58ac56"/><rect x="47.40" y="0" width="2.9" height="10" fill="#58ac56"/><rect x="51.35" y="0" width="2.9" height="10" fill="#58ac56"/><rect x="55.30" y="0" width="2.9" height="10" fill="#58ac56"/><rect x="59.25" y="0" width="2.9" height="10" fill="#58ac56"/><rect x="63.20" y="0" width="2.9" height="10" fill="#58ac56"/><rect x="67.15" y="0" width="2.9" height="10" fill="#58ac56"/><rect x="71.10" y="0" width="2.9" height="10" fill="#58ac56"/><rect x="75.05" y="0" width="2.9" height="10" fill="#58ac56"/><rect x="79.00" y="0" width="2.9" height="10" fill="#58ac56"/><rect x="82.95" y="0" width="2.9" height="10" fill="#58ac56"/><rect x="86.90" y="0" width="2.9" height="10" fill="#58ac56"/><rect x="90.85" y="0" width="2.9" height="10" fill="#58ac56"/><rect x="94.80" y="0" width="2.9" height="10" fill="#58ac56"/><rect x="98.75" y="0" width="2.9" height="10" fill="#58ac56"/><rect x="102.70" y="0" width="2.9" height="10" fill="#58ac56"/><rect x="106.65" y="0" width="2.9" height="10" fill="#58ac56"/><rect x="110.60" y="0" width="2.9" height="10" fill="#58ac56"/><rect x="114.55" y="0" width="2.9" height="10" fill="#58ac56"/><rect x="118.50" y="0" width="2.9" height="10" fill="#58ac56"/><rect x="122.45" y="0" width="2.9" height="10" fill="#ddefda"/><rect x="126.40" y="0" width="2.9" height="10" fill="#ddefda"/><rect x="130.35" y="0" width="2.9" height="10" fill="#ddefda"/><rect x="134.30" y="0" width="2.9" height="10" fill="#ddefda"/><rect x="138.25" y="0" width="2.9" height="10" fill="#ddefda"/><rect x="142.20" y="0" width="2.9" height="10" fill="#ddefda"/><rect x="146.15" y="0" width="2.9" height="10" fill="#ddefda"/><rect x="150.10" y="0" width="2.9" height="10" fill="#ddefda"/><rect x="154.05" y="0" width="2.9" height="10" fill="#ddefda"/><rect x="158.00" y="0" width="2.9" height="10" fill="#ddefda"/><rect x="161.95" y="0" width="2.9" height="10" fill="#ddefda"/><rect x="165.90" y="0" width="2.9" height="10" fill="#ddefda"/><rect x="169.85" y="0" width="2.9" height="10" fill="#ddefda"/><rect x="173.80" y="0" width="2.9" height="10" fill="#ddefda"/><rect x="177.75" y="0" width="2.9" height="10" fill="#ddefda"/><rect x="181.70" y="0" width="2.9" height="10" fill="#ddefda"/><rect x="185.65" y="0" width="2.9" height="10" fill="#ddefda"/><rect x="189.60" y="0" width="2.9" height="10" fill="#ddefda"/><rect x="193.55" y="0" width="2.9" height="10" fill="#ddefda"/><rect x="197.50" y="0" width="2.9" height="10" fill="#ddefda"/><rect x="201.45" y="0" width="2.9" height="10" fill="#ddefda"/><rect x="205.40" y="0" width="2.9" height="10" fill="#ddefda"/><rect x="209.35" y="0" width="2.9" height="10" fill="#ddefda"/><rect x="213.30" y="0" width="2.9" height="10" fill="#ddefda"/><rect x="217.25" y="0" width="2.9" height="10" fill="#ddefda"/><rect x="221.20" y="0" width="2.9" height="10" fill="#ddefda"/><rect x="225.15" y="0" width="2.9" height="10" fill="#ddefda"/><rect x="229.10" y="0" width="2.9" height="10" fill="#ddefda"/><rect x="233.05" y="0" width="2.9" height="10" fill="#ddefda"/><rect x="237.00" y="0" width="2.9" height="10" fill="#ddefda"/><rect x="240.95" y="0" width="2.9" height="10" fill="#ddefda"/><rect x="244.90" y="0" width="2.9" height="10" fill="#d9e6f8"/><rect x="248.85" y="0" width="2.9" height="10" fill="#d9e6f8"/><rect x="252.80" y="0" width="2.9" height="10" fill="#d9e6f8"/><rect x="256.75" y="0" width="2.9" height="10" fill="#d9e6f8"/><rect x="260.70" y="0" width="2.9" height="10" fill="#d9e6f8"/><rect x="264.65" y="0" width="2.9" height="10" fill="#d9e6f8"/><rect x="268.60" y="0" width="2.9" height="10" fill="#d9e6f8"/><rect x="272.55" y="0" width="2.9" height="10" fill="#d9e6f8"/><rect x="276.50" y="0" width="2.9" height="10" fill="#d9e6f8"/><rect x="280.45" y="0" width="2.9" height="10" fill="#d9e6f8"/></svg><div class="t" style="left:476.94px;top:106.200px;font-size:6.4px;line-height:6.4px;color:#5aae58;transform:scaleX(1.1308);transform-origin:0 0;">mi</div><div class="t" style="left:457.39px;top:105.200px;font-size:7.2px;line-height:7.2px;color:#5aae58;transform:scaleX(1.0080);transform-origin:0 0;-webkit-text-stroke:0.12px #5aae58;">152.1</div><div style="position:absolute;left:0.00px;top:134.12px;width:498.10px;height:1.00px;background:#ececec;"></div><div style="position:absolute;left:85.90px;top:117.78px;width:1.00px;height:16.84px;background:#efefef;"></div><div style="position:absolute;left:129.60px;top:117.78px;width:1.00px;height:16.84px;background:#efefef;"></div><svg class="pa" style="left:133.70px;top:121.08px;width:283.40px;height:10px;" viewBox="0 0 283.40 10"><rect x="0.00" y="0" width="2.9" height="10" fill="#58ac56"/><rect x="3.95" y="0" width="2.9" height="10" fill="#58ac56"/><rect x="7.90" y="0" width="2.9" height="10" fill="#58ac56"/><rect x="11.85" y="0" width="2.9" height="10" fill="#58ac56"/><rect x="15.80" y="0" width="2.9" height="10" fill="#58ac56"/><rect x="19.75" y="0" width="2.9" height="10" fill="#58ac56"/><rect x="23.70" y="0" width="2.9" height="10" fill="#58ac56"/><rect x="27.65" y="0" width="2.9" height="10" fill="#58ac56"/><rect x="31.60" y="0" width="2.9" height="10" fill="#58ac56"/><rect x="35.55" y="0" width="2.9" height="10" fill="#58ac56"/><rect x="39.50" y="0" width="2.9" height="10" fill="#58ac56"/><rect x="43.45" y="0" width="2.9" height="10" fill="#58ac56"/><rect x="47.40" y="0" width="2.9" height="10" fill="#58ac56"/><rect x="51.35" y="0" width="2.9" height="10" fill="#58ac56"/><rect x="55.30" y="0" width="2.9" height="10" fill="#58ac56"/><rect x="59.25" y="0" width="2.9" height="10" fill="#58ac56"/><rect x="63.20" y="0" width="2.9" height="10" fill="#58ac56"/><rect x="67.15" y="0" width="2.9" height="10" fill="#58ac56"/><rect x="71.10" y="0" width="2.9" height="10" fill="#58ac56"/><rect x="75.05" y="0" width="2.9" height="10" fill="#58ac56"/><rect x="79.00" y="0" width="2.9" height="10" fill="#58ac56"/><rect x="82.95" y="0" width="2.9" height="10" fill="#58ac56"/><rect x="86.90" y="0" width="2.9" height="10" fill="#58ac56"/><rect x="90.85" y="0" width="2.9" height="10" fill="#58ac56"/><rect x="94.80" y="0" width="2.9" height="10" fill="#58ac56"/><rect x="98.75" y="0" width="2.9" height="10" fill="#58ac56"/><rect x="102.70" y="0" width="2.9" height="10" fill="#58ac56"/><rect x="106.65" y="0" width="2.9" height="10" fill="#58ac56"/><rect x="110.60" y="0" width="2.9" height="10" fill="#ddefda"/><rect x="114.55" y="0" width="2.9" height="10" fill="#ddefda"/><rect x="118.50" y="0" width="2.9" height="10" fill="#ddefda"/><rect x="122.45" y="0" width="2.9" height="10" fill="#ddefda"/><rect x="126.40" y="0" width="2.9" height="10" fill="#ddefda"/><rect x="130.35" y="0" width="2.9" height="10" fill="#ddefda"/><rect x="134.30" y="0" width="2.9" height="10" fill="#ddefda"/><rect x="138.25" y="0" width="2.9" height="10" fill="#ddefda"/><rect x="142.20" y="0" width="2.9" height="10" fill="#ddefda"/><rect x="146.15" y="0" width="2.9" height="10" fill="#ddefda"/><rect x="150.10" y="0" width="2.9" height="10" fill="#ddefda"/><rect x="154.05" y="0" width="2.9" height="10" fill="#ddefda"/><rect x="158.00" y="0" width="2.9" height="10" fill="#ddefda"/><rect x="161.95" y="0" width="2.9" height="10" fill="#ddefda"/><rect x="165.90" y="0" width="2.9" height="10" fill="#ddefda"/><rect x="169.85" y="0" width="2.9" height="10" fill="#ddefda"/><rect x="173.80" y="0" width="2.9" height="10" fill="#ddefda"/><rect x="177.75" y="0" width="2.9" height="10" fill="#ddefda"/><rect x="181.70" y="0" width="2.9" height="10" fill="#ddefda"/><rect x="185.65" y="0" width="2.9" height="10" fill="#ddefda"/><rect x="189.60" y="0" width="2.9" height="10" fill="#ddefda"/><rect x="193.55" y="0" width="2.9" height="10" fill="#ddefda"/><rect x="197.50" y="0" width="2.9" height="10" fill="#ddefda"/><rect x="201.45" y="0" width="2.9" height="10" fill="#ddefda"/><rect x="205.40" y="0" width="2.9" height="10" fill="#ddefda"/><rect x="209.35" y="0" width="2.9" height="10" fill="#ddefda"/><rect x="213.30" y="0" width="2.9" height="10" fill="#ddefda"/><rect x="217.25" y="0" width="2.9" height="10" fill="#ddefda"/><rect x="221.20" y="0" width="2.9" height="10" fill="#ddefda"/><rect x="225.15" y="0" width="2.9" height="10" fill="#ddefda"/><rect x="229.10" y="0" width="2.9" height="10" fill="#ddefda"/><rect x="233.05" y="0" width="2.9" height="10" fill="#ddefda"/><rect x="237.00" y="0" width="2.9" height="10" fill="#ddefda"/><rect x="240.95" y="0" width="2.9" height="10" fill="#ddefda"/><rect x="244.90" y="0" width="2.9" height="10" fill="#d9e6f8"/><rect x="248.85" y="0" width="2.9" height="10" fill="#d9e6f8"/><rect x="252.80" y="0" width="2.9" height="10" fill="#d9e6f8"/><rect x="256.75" y="0" width="2.9" height="10" fill="#d9e6f8"/><rect x="260.70" y="0" width="2.9" height="10" fill="#d9e6f8"/><rect x="264.65" y="0" width="2.9" height="10" fill="#d9e6f8"/><rect x="268.60" y="0" width="2.9" height="10" fill="#d9e6f8"/><rect x="272.55" y="0" width="2.9" height="10" fill="#d9e6f8"/><rect x="276.50" y="0" width="2.9" height="10" fill="#d9e6f8"/><rect x="280.45" y="0" width="2.9" height="10" fill="#d9e6f8"/></svg></div><div style="position:absolute;left:499.10px;top:31.80px;width:2.70px;height:22.80px;background:#d6d7d7;"></div>
</div>
<div style="position:absolute;left:10.95px;top:339.50px;width:5.0px;height:5.0px;border-radius:50%;background:#4ea84a;"></div>
<div class="t" style="left:17.70px;top:339.000px;font-size:8.2px;line-height:8.2px;color:#555;transform:scaleX(0.8136);transform-origin:0 0;">Speed &lt; 43 mph</div>
<div class="t" style="left:68.23px;top:340.000px;font-size:8.2px;line-height:8.2px;color:#aaa;">|</div>
<div style="position:absolute;left:71.55px;top:339.50px;width:5.0px;height:5.0px;border-radius:50%;background:#ffd500;"></div>
<div class="t" style="left:78.20px;top:339.000px;font-size:8.2px;line-height:8.2px;color:#555;transform:scaleX(0.8152);transform-origin:0 0;">Speed &gt; 43 mph</div>
<div class="t" style="left:128.43px;top:340.000px;font-size:8.2px;line-height:8.2px;color:#aaa;">|</div>
<div style="position:absolute;left:132.45px;top:339.50px;width:5.0px;height:5.0px;border-radius:50%;background:#e53935;"></div>
<div class="t" style="left:139.00px;top:339.000px;font-size:8.2px;line-height:8.2px;color:#555;transform:scaleX(0.8169);transform-origin:0 0;">Speed &gt; 56 mph</div>
<div style="position:absolute;left:517.85px;top:339.50px;width:5.0px;height:5.0px;border-radius:50%;background:#4ea84a;"></div>
<div class="t" style="left:524.05px;top:339.000px;font-size:8.2px;line-height:8.2px;color:#555;transform:scaleX(0.8328);transform-origin:0 0;">Distance Travelled &lt; 310 miles</div>
<div class="t" style="left:618.53px;top:340.000px;font-size:8.2px;line-height:8.2px;color:#aaa;">|</div>
<div style="position:absolute;left:622.45px;top:339.50px;width:5.0px;height:5.0px;border-radius:50%;background:#3f7fe0;"></div>
<div class="t" style="left:628.25px;top:339.000px;font-size:8.2px;line-height:8.2px;color:#555;transform:scaleX(0.8364);transform-origin:0 0;">Distance Travelled &gt; 310 miles</div>
<div class="panel" style="left:7.20px;top:365.70px;width:501.80px;height:164.30px;">
<div class="t" style="left:230.07px;top:3.300px;font-size:8.3px;line-height:8.3px;color:#333;transform:scaleX(0.8026);transform-origin:0 0;-webkit-text-stroke:0.18px #333;">Engine Usage</div><div style="position:absolute;left:0.00px;top:15.30px;width:501.80px;height:15.80px;background:#f3f4f4;"></div><div style="position:absolute;left:66.80px;top:15.30px;width:1.00px;height:15.80px;background:#e4e5e5;"></div><div style="position:absolute;left:121.00px;top:15.30px;width:1.00px;height:15.80px;background:#e4e5e5;"></div><div class="t" style="left:7.77px;top:19.300px;font-size:7.8px;line-height:7.8px;color:#4f73d9;transform:scaleX(0.8798);transform-origin:0 0;-webkit-text-stroke:0.15px #4f73d9;">Vehicle Name</div><svg class="pa" style="left:52.00px;top:19.60px;width:6.8px;height:7.2px;" viewBox="0 0 14 15"><path d="M1 1.2 H13 L8.3 7 V13.6 L5.7 12 V7 Z" fill="none" stroke="#7a7a7a" stroke-width="1.7" stroke-linejoin="round"/></svg><div class="t" style="left:81.32px;top:19.300px;font-size:7.8px;line-height:7.8px;color:#4f73d9;transform:scaleX(0.9340);transform-origin:0 0;-webkit-text-stroke:0.15px #4f73d9;">Plate</div><svg class="pa" style="left:99.80px;top:19.60px;width:6.8px;height:7.2px;" viewBox="0 0 14 15"><path d="M1 1.2 H13 L8.3 7 V13.6 L5.7 12 V7 Z" fill="none" stroke="#7a7a7a" stroke-width="1.7" stroke-linejoin="round"/></svg><div class="t" style="left:285.74px;top:19.300px;font-size:7.8px;line-height:7.8px;color:#4f73d9;transform:scaleX(0.8896);transform-origin:0 0;-webkit-text-stroke:0.15px #4f73d9;">Engine Hours</div><svg class="pa" style="left:330.05px;top:19.60px;width:6.8px;height:7.2px;" viewBox="0 0 14 15"><path d="M1 1.2 H13 L8.3 7 V13.6 L5.7 12 V7 Z" fill="none" stroke="#7a7a7a" stroke-width="1.7" stroke-linejoin="round"/></svg><div class="pa" style="left:0;top:31.100px;width:501.80px;height:133.200px;overflow:hidden;"><div style="position:absolute;left:0.00px;top:16.34px;width:497.80px;height:1.00px;background:#ececec;"></div><div style="position:absolute;left:66.80px;top:0.00px;width:1.00px;height:16.84px;background:#efefef;"></div><div style="position:absolute;left:121.00px;top:0.00px;width:1.00px;height:16.84px;background:#efefef;"></div><div class="t" style="left:25.01px;top:4.200px;font-size:7.6px;line-height:7.6px;color:#525252;transform:scaleX(0.9185);transform-origin:0 0;">PB02</div><div class="t" style="left:79.16px;top:4.200px;font-size:7.6px;line-height:7.6px;color:#525252;transform:scaleX(0.8779);transform-origin:0 0;">OP-00070</div><div style="position:absolute;left:124.30px;top:3.30px;width:295.00px;height:9.70px;background:#ebebeb;border-radius:2px;"></div><div style="position:absolute;left:124.30px;top:3.30px;width:293.70px;height:9.70px;background:#c5e1c0;border-radius:2px;box-shadow:inset -1px 0 0 #7dbf78;"></div><div class="t" style="left:478.92px;top:5.200px;font-size:6.4px;line-height:6.4px;color:#5fb35a;transform:scaleX(1.0245);transform-origin:0 0;">hrs</div><div class="t" style="left:463.45px;top:4.200px;font-size:7.2px;line-height:7.2px;color:#5fb35a;-webkit-text-stroke:0.12px #5fb35a;">85.3</div><div style="position:absolute;left:0.00px;top:33.18px;width:497.80px;height:1.00px;background:#ececec;"></div><div style="position:absolute;left:66.80px;top:16.84px;width:1.00px;height:16.84px;background:#efefef;"></div><div style="position:absolute;left:121.00px;top:16.84px;width:1.00px;height:16.84px;background:#efefef;"></div><div class="t" style="left:22.62px;top:21.200px;font-size:7.6px;line-height:7.6px;color:#525252;transform:scaleX(0.8887);transform-origin:0 0;">E3-083</div><div class="t" style="left:81.59px;top:21.200px;font-size:7.6px;line-height:7.6px;color:#525252;transform:scaleX(0.8782);transform-origin:0 0;">9486-TE</div><div style="position:absolute;left:124.30px;top:20.14px;width:295.00px;height:9.70px;background:#ebebeb;border-radius:2px;"></div><div style="position:absolute;left:124.30px;top:20.14px;width:293.70px;height:9.70px;background:#c5e1c0;border-radius:2px;box-shadow:inset -1px 0 0 #7dbf78;"></div><div class="t" style="left:478.92px;top:22.200px;font-size:6.4px;line-height:6.4px;color:#5fb35a;transform:scaleX(1.0245);transform-origin:0 0;">hrs</div><div class="t" style="left:463.45px;top:21.200px;font-size:7.2px;line-height:7.2px;color:#5fb35a;-webkit-text-stroke:0.12px #5fb35a;">85.3</div><div style="position:absolute;left:0.00px;top:50.02px;width:497.80px;height:1.00px;background:#ececec;"></div><div style="position:absolute;left:66.80px;top:33.68px;width:1.00px;height:16.84px;background:#efefef;"></div><div style="position:absolute;left:121.00px;top:33.68px;width:1.00px;height:16.84px;background:#efefef;"></div><div class="t" style="left:22.12px;top:38.200px;font-size:7.6px;line-height:7.6px;color:#525252;transform:scaleX(0.8574);transform-origin:0 0;">EXC-15</div><div class="t" style="left:81.62px;top:38.200px;font-size:7.6px;line-height:7.6px;color:#525252;transform:scaleX(0.8724);transform-origin:0 0;">0740-ET</div><div style="position:absolute;left:124.30px;top:36.98px;width:295.00px;height:9.70px;background:#ebebeb;border-radius:2px;"></div><div style="position:absolute;left:124.30px;top:36.98px;width:119.13px;height:9.70px;background:#c5e1c0;border-radius:2px;box-shadow:inset -1px 0 0 #7dbf78;"></div><div class="t" style="left:478.92px;top:39.200px;font-size:6.4px;line-height:6.4px;color:#5fb35a;transform:scaleX(1.0245);transform-origin:0 0;">hrs</div><div class="t" style="left:463.49px;top:38.200px;font-size:7.2px;line-height:7.2px;color:#5fb35a;-webkit-text-stroke:0.12px #5fb35a;">34.6</div><div style="position:absolute;left:0.00px;top:66.86px;width:497.80px;height:1.00px;background:#ececec;"></div><div style="position:absolute;left:66.80px;top:50.52px;width:1.00px;height:16.84px;background:#efefef;"></div><div style="position:absolute;left:121.00px;top:50.52px;width:1.00px;height:16.84px;background:#efefef;"></div><div class="t" style="left:19.28px;top:55.200px;font-size:7.6px;line-height:7.6px;color:#525252;transform:scaleX(0.8586);transform-origin:0 0;">E BUS-11</div><div class="t" style="left:81.06px;top:55.200px;font-size:7.6px;line-height:7.6px;color:#525252;transform:scaleX(0.8785);transform-origin:0 0;">OP-0022</div><div style="position:absolute;left:124.30px;top:53.82px;width:295.00px;height:9.70px;background:#ebebeb;border-radius:2px;"></div><div style="position:absolute;left:124.30px;top:53.82px;width:61.29px;height:9.70px;background:#c5e1c0;border-radius:2px;box-shadow:inset -1px 0 0 #7dbf78;"></div><div class="t" style="left:478.92px;top:56.200px;font-size:6.4px;line-height:6.4px;color:#5fb35a;transform:scaleX(1.0245);transform-origin:0 0;">hrs</div><div class="t" style="left:463.23px;top:55.200px;font-size:7.2px;line-height:7.2px;color:#5fb35a;transform:scaleX(1.0169);transform-origin:0 0;-webkit-text-stroke:0.12px #5fb35a;">17.8</div><div style="position:absolute;left:0.00px;top:83.70px;width:497.80px;height:1.00px;background:#ececec;"></div><div style="position:absolute;left:66.80px;top:67.36px;width:1.00px;height:16.84px;background:#efefef;"></div><div style="position:absolute;left:121.00px;top:67.36px;width:1.00px;height:16.84px;background:#efefef;"></div><div class="t" style="left:22.62px;top:72.200px;font-size:7.6px;line-height:7.6px;color:#525252;transform:scaleX(0.8887);transform-origin:0 0;">E3-068</div><div class="t" style="left:81.59px;top:72.200px;font-size:7.6px;line-height:7.6px;color:#525252;transform:scaleX(0.8782);transform-origin:0 0;">9176-TE</div><div style="position:absolute;left:124.30px;top:70.66px;width:295.00px;height:9.70px;background:#ebebeb;border-radius:2px;"></div><div style="position:absolute;left:124.30px;top:70.66px;width:55.09px;height:9.70px;background:#c5e1c0;border-radius:2px;box-shadow:inset -1px 0 0 #7dbf78;"></div><div class="t" style="left:478.92px;top:73.200px;font-size:6.4px;line-height:6.4px;color:#5fb35a;transform:scaleX(1.0245);transform-origin:0 0;">hrs</div><div class="t" style="left:463.23px;top:72.200px;font-size:7.2px;line-height:7.2px;color:#5fb35a;transform:scaleX(1.0142);transform-origin:0 0;-webkit-text-stroke:0.12px #5fb35a;">16.0</div><div style="position:absolute;left:0.00px;top:100.54px;width:497.80px;height:1.00px;background:#ececec;"></div><div style="position:absolute;left:66.80px;top:84.20px;width:1.00px;height:16.84px;background:#efefef;"></div><div style="position:absolute;left:121.00px;top:84.20px;width:1.00px;height:16.84px;background:#efefef;"></div><div class="t" style="left:19.29px;top:88.200px;font-size:7.6px;line-height:7.6px;color:#525252;transform:scaleX(0.8447);transform-origin:0 0;">E BUS-02</div><div class="t" style="left:81.06px;top:88.200px;font-size:7.6px;line-height:7.6px;color:#525252;transform:scaleX(0.8785);transform-origin:0 0;">OP-0012</div><div style="position:absolute;left:124.30px;top:87.50px;width:295.00px;height:9.70px;background:#ebebeb;border-radius:2px;"></div><div style="position:absolute;left:124.30px;top:87.50px;width:52.68px;height:9.70px;background:#c5e1c0;border-radius:2px;box-shadow:inset -1px 0 0 #7dbf78;"></div><div class="t" style="left:478.92px;top:89.200px;font-size:6.4px;line-height:6.4px;color:#5fb35a;transform:scaleX(1.0245);transform-origin:0 0;">hrs</div><div class="t" style="left:463.23px;top:88.200px;font-size:7.2px;line-height:7.2px;color:#5fb35a;transform:scaleX(1.0169);transform-origin:0 0;-webkit-text-stroke:0.12px #5fb35a;">15.3</div><div style="position:absolute;left:0.00px;top:117.38px;width:497.80px;height:1.00px;background:#ececec;"></div><div style="position:absolute;left:66.80px;top:101.04px;width:1.00px;height:16.84px;background:#efefef;"></div><div style="position:absolute;left:121.00px;top:101.04px;width:1.00px;height:16.84px;background:#efefef;"></div><div class="t" style="left:8.05px;top:105.200px;font-size:7.6px;line-height:7.6px;color:#525252;transform:scaleX(0.8273);transform-origin:0 0;">E BUS-03 SPEAR</div><div class="t" style="left:81.06px;top:105.200px;font-size:7.6px;line-height:7.6px;color:#525252;transform:scaleX(0.8945);transform-origin:0 0;">OP-0011</div><div style="position:absolute;left:124.30px;top:104.34px;width:295.00px;height:9.70px;background:#ebebeb;border-radius:2px;"></div><div style="position:absolute;left:124.30px;top:104.34px;width:41.32px;height:9.70px;background:#c5e1c0;border-radius:2px;box-shadow:inset -1px 0 0 #7dbf78;"></div><div class="t" style="left:478.92px;top:106.200px;font-size:6.4px;line-height:6.4px;color:#5fb35a;transform:scaleX(1.0245);transform-origin:0 0;">hrs</div><div class="t" style="left:463.23px;top:105.200px;font-size:7.2px;line-height:7.2px;color:#5fb35a;transform:scaleX(1.0142);transform-origin:0 0;-webkit-text-stroke:0.12px #5fb35a;">12.0</div><div style="position:absolute;left:0.00px;top:134.22px;width:497.80px;height:1.00px;background:#ececec;"></div><div style="position:absolute;left:66.80px;top:117.88px;width:1.00px;height:16.84px;background:#efefef;"></div><div style="position:absolute;left:121.00px;top:117.88px;width:1.00px;height:16.84px;background:#efefef;"></div><div class="t" style="left:20.06px;top:122.200px;font-size:7.6px;line-height:7.6px;color:#525252;transform:scaleX(0.8894);transform-origin:0 0;">PRV-019</div><div class="t" style="left:80.50px;top:122.200px;font-size:7.6px;line-height:7.6px;color:#525252;transform:scaleX(0.9316);transform-origin:0 0;">1039696</div><div style="position:absolute;left:124.30px;top:121.18px;width:295.00px;height:9.70px;background:#ebebeb;border-radius:2px;"></div><div style="position:absolute;left:124.30px;top:121.18px;width:32.02px;height:9.70px;background:#c5e1c0;border-radius:2px;box-shadow:inset -1px 0 0 #7dbf78;"></div><div class="t" style="left:478.92px;top:123.200px;font-size:6.4px;line-height:6.4px;color:#5fb35a;transform:scaleX(1.0245);transform-origin:0 0;">hrs</div><div class="t" style="left:467.32px;top:122.200px;font-size:7.2px;line-height:7.2px;color:#5fb35a;transform:scaleX(1.0137);transform-origin:0 0;-webkit-text-stroke:0.12px #5fb35a;">9.3</div></div><div style="position:absolute;left:499.10px;top:31.60px;width:2.70px;height:22.70px;background:#d6d7d7;"></div>
</div>
<div class="panel" style="left:514.00px;top:365.70px;width:502.00px;height:164.30px;">
<div class="t" style="left:221.10px;top:3.300px;font-size:8.3px;line-height:8.3px;color:#333;transform:scaleX(0.8091);transform-origin:0 0;-webkit-text-stroke:0.18px #333;">Idling Engine Usage</div><div style="position:absolute;left:0.00px;top:15.30px;width:502.00px;height:15.80px;background:#f3f4f4;"></div><div style="position:absolute;left:59.00px;top:15.30px;width:1.00px;height:15.80px;background:#e4e5e5;"></div><div style="position:absolute;left:112.60px;top:15.30px;width:1.00px;height:15.80px;background:#e4e5e5;"></div><div class="t" style="left:3.97px;top:19.300px;font-size:7.8px;line-height:7.8px;color:#4f73d9;transform:scaleX(0.8798);transform-origin:0 0;-webkit-text-stroke:0.15px #4f73d9;">Vehicle Name</div><svg class="pa" style="left:48.20px;top:19.60px;width:6.8px;height:7.2px;" viewBox="0 0 14 15"><path d="M1 1.2 H13 L8.3 7 V13.6 L5.7 12 V7 Z" fill="none" stroke="#7a7a7a" stroke-width="1.7" stroke-linejoin="round"/></svg><div class="t" style="left:73.33px;top:19.300px;font-size:7.8px;line-height:7.8px;color:#4f73d9;transform:scaleX(0.9102);transform-origin:0 0;-webkit-text-stroke:0.15px #4f73d9;">Plate</div><svg class="pa" style="left:92.10px;top:19.60px;width:6.8px;height:7.2px;" viewBox="0 0 14 15"><path d="M1 1.2 H13 L8.3 7 V13.6 L5.7 12 V7 Z" fill="none" stroke="#7a7a7a" stroke-width="1.7" stroke-linejoin="round"/></svg><div class="t" style="left:285.35px;top:19.300px;font-size:7.8px;line-height:7.8px;color:#4f73d9;transform:scaleX(0.9274);transform-origin:0 0;-webkit-text-stroke:0.15px #4f73d9;">Idling Time</div><svg class="pa" style="left:322.50px;top:19.60px;width:6.8px;height:7.2px;" viewBox="0 0 14 15"><path d="M1 1.2 H13 L8.3 7 V13.6 L5.7 12 V7 Z" fill="none" stroke="#7a7a7a" stroke-width="1.7" stroke-linejoin="round"/></svg><div class="pa" style="left:0;top:31.100px;width:502.00px;height:133.200px;overflow:hidden;"><div style="position:absolute;left:0.00px;top:2.10px;width:498.00px;height:1.00px;background:#ececec;"></div><div style="position:absolute;left:0.00px;top:18.94px;width:498.00px;height:1.00px;background:#ececec;"></div><div style="position:absolute;left:59.00px;top:2.60px;width:1.00px;height:16.84px;background:#efefef;"></div><div style="position:absolute;left:112.60px;top:2.60px;width:1.00px;height:16.84px;background:#efefef;"></div><div class="t" style="left:4.15px;top:7.200px;font-size:7.6px;line-height:7.6px;color:#525252;transform:scaleX(0.8273);transform-origin:0 0;">E BUS-03 SPEAR</div><div class="t" style="left:72.96px;top:7.200px;font-size:7.6px;line-height:7.6px;color:#525252;transform:scaleX(0.8945);transform-origin:0 0;">OP-0011</div><div style="position:absolute;left:116.60px;top:5.90px;width:303.10px;height:9.60px;background:#ebebeb;border-radius:2px;"></div><div style="position:absolute;left:116.60px;top:5.90px;width:7.38px;height:9.60px;background:#e3b200;border-radius:2px;"></div><div class="t" style="left:479.42px;top:8.200px;font-size:6.4px;line-height:6.4px;color:#e2b62c;transform:scaleX(1.0245);transform-origin:0 0;">hrs</div><div class="t" style="left:463.91px;top:7.200px;font-size:7.2px;line-height:7.2px;color:#e2b62c;transform:scaleX(1.0032);transform-origin:0 0;-webkit-text-stroke:0.12px #e2b62c;">2.08</div><div style="position:absolute;left:0.00px;top:35.78px;width:498.00px;height:1.00px;background:#ececec;"></div><div style="position:absolute;left:59.00px;top:19.44px;width:1.00px;height:16.84px;background:#efefef;"></div><div style="position:absolute;left:112.60px;top:19.44px;width:1.00px;height:16.84px;background:#efefef;"></div><div class="t" style="left:16.16px;top:24.200px;font-size:7.6px;line-height:7.6px;color:#525252;transform:scaleX(0.8894);transform-origin:0 0;">PRV-019</div><div class="t" style="left:72.40px;top:24.200px;font-size:7.6px;line-height:7.6px;color:#525252;transform:scaleX(0.9316);transform-origin:0 0;">1039696</div><div style="position:absolute;left:116.60px;top:22.74px;width:303.10px;height:9.60px;background:#ebebeb;border-radius:2px;"></div><div style="position:absolute;left:116.60px;top:22.74px;width:5.04px;height:9.60px;background:#e3b200;border-radius:2px;"></div><div class="t" style="left:479.42px;top:25.200px;font-size:6.4px;line-height:6.4px;color:#e2b62c;transform:scaleX(1.0245);transform-origin:0 0;">hrs</div><div class="t" style="left:463.72px;top:24.200px;font-size:7.2px;line-height:7.2px;color:#e2b62c;transform:scaleX(1.0225);transform-origin:0 0;-webkit-text-stroke:0.12px #e2b62c;">1.42</div><div style="position:absolute;left:0.00px;top:52.62px;width:498.00px;height:1.00px;background:#ececec;"></div><div style="position:absolute;left:59.00px;top:36.28px;width:1.00px;height:16.84px;background:#efefef;"></div><div style="position:absolute;left:112.60px;top:36.28px;width:1.00px;height:16.84px;background:#efefef;"></div><div class="t" style="left:15.39px;top:40.200px;font-size:7.6px;line-height:7.6px;color:#525252;transform:scaleX(0.8447);transform-origin:0 0;">E BUS-07</div><div class="t" style="left:72.96px;top:40.200px;font-size:7.6px;line-height:7.6px;color:#525252;transform:scaleX(0.8773);transform-origin:0 0;">OP-0019</div><div style="position:absolute;left:116.60px;top:39.58px;width:303.10px;height:9.60px;background:#ebebeb;border-radius:2px;"></div><div style="position:absolute;left:116.60px;top:39.58px;width:31.88px;height:9.60px;background:#e3b200;border-radius:2px;"></div><div class="t" style="left:479.42px;top:41.200px;font-size:6.4px;line-height:6.4px;color:#e2b62c;transform:scaleX(1.0245);transform-origin:0 0;">hrs</div><div class="t" style="left:463.95px;top:40.200px;font-size:7.2px;line-height:7.2px;color:#e2b62c;-webkit-text-stroke:0.12px #e2b62c;">8.98</div><div style="position:absolute;left:0.00px;top:69.46px;width:498.00px;height:1.00px;background:#ececec;"></div><div style="position:absolute;left:59.00px;top:53.12px;width:1.00px;height:16.84px;background:#efefef;"></div><div style="position:absolute;left:112.60px;top:53.12px;width:1.00px;height:16.84px;background:#efefef;"></div><div class="t" style="left:18.72px;top:57.200px;font-size:7.6px;line-height:7.6px;color:#525252;transform:scaleX(0.8887);transform-origin:0 0;">E3-155</div><div class="t" style="left:71.36px;top:57.200px;font-size:7.6px;line-height:7.6px;color:#525252;transform:scaleX(0.9037);transform-origin:0 0;">11638-TE</div><div style="position:absolute;left:116.60px;top:56.42px;width:303.10px;height:9.60px;background:#ebebeb;border-radius:2px;"></div><div style="position:absolute;left:116.60px;top:56.42px;width:32.48px;height:9.60px;background:#e3b200;border-radius:2px;"></div><div class="t" style="left:479.42px;top:58.200px;font-size:6.4px;line-height:6.4px;color:#e2b62c;transform:scaleX(1.0245);transform-origin:0 0;">hrs</div><div class="t" style="left:463.95px;top:57.200px;font-size:7.2px;line-height:7.2px;color:#e2b62c;-webkit-text-stroke:0.12px #e2b62c;">9.15</div><div style="position:absolute;left:0.00px;top:86.30px;width:498.00px;height:1.00px;background:#ececec;"></div><div style="position:absolute;left:59.00px;top:69.96px;width:1.00px;height:16.84px;background:#efefef;"></div><div style="position:absolute;left:112.60px;top:69.96px;width:1.00px;height:16.84px;background:#efefef;"></div><div class="t" style="left:16.16px;top:74.200px;font-size:7.6px;line-height:7.6px;color:#525252;transform:scaleX(0.8882);transform-origin:0 0;">PRV-068</div><div class="t" style="left:72.78px;top:74.200px;font-size:7.6px;line-height:7.6px;color:#525252;transform:scaleX(0.9120);transform-origin:0 0;">JJW-456</div><div style="position:absolute;left:116.60px;top:73.26px;width:303.10px;height:9.60px;background:#ebebeb;border-radius:2px;"></div><div style="position:absolute;left:116.60px;top:73.26px;width:14.16px;height:9.60px;background:#e3b200;border-radius:2px;"></div><div class="t" style="left:479.42px;top:75.200px;font-size:6.4px;line-height:6.4px;color:#e2b62c;transform:scaleX(1.0245);transform-origin:0 0;">hrs</div><div class="t" style="left:463.99px;top:74.200px;font-size:7.2px;line-height:7.2px;color:#e2b62c;-webkit-text-stroke:0.12px #e2b62c;">3.99</div><div style="position:absolute;left:0.00px;top:103.14px;width:498.00px;height:1.00px;background:#ececec;"></div><div style="position:absolute;left:59.00px;top:86.80px;width:1.00px;height:16.84px;background:#efefef;"></div><div style="position:absolute;left:112.60px;top:86.80px;width:1.00px;height:16.84px;background:#efefef;"></div><div class="t" style="left:18.22px;top:91.200px;font-size:7.6px;line-height:7.6px;color:#525252;transform:scaleX(0.8574);transform-origin:0 0;">EXC-13</div><div class="t" style="left:73.52px;top:91.200px;font-size:7.6px;line-height:7.6px;color:#525252;transform:scaleX(0.8724);transform-origin:0 0;">0812-ET</div><div style="position:absolute;left:116.60px;top:90.10px;width:303.10px;height:9.60px;background:#ebebeb;border-radius:2px;"></div><div style="position:absolute;left:116.60px;top:90.10px;width:17.32px;height:9.60px;background:#e3b200;border-radius:2px;"></div><div class="t" style="left:479.42px;top:92.200px;font-size:6.4px;line-height:6.4px;color:#e2b62c;transform:scaleX(1.0245);transform-origin:0 0;">hrs</div><div class="t" style="left:464.13px;top:91.200px;font-size:7.2px;line-height:7.2px;color:#e2b62c;transform:scaleX(0.9873);transform-origin:0 0;-webkit-text-stroke:0.12px #e2b62c;">4.88</div><div style="position:absolute;left:0.00px;top:119.98px;width:498.00px;height:1.00px;background:#ececec;"></div><div style="position:absolute;left:59.00px;top:103.64px;width:1.00px;height:16.84px;background:#efefef;"></div><div style="position:absolute;left:112.60px;top:103.64px;width:1.00px;height:16.84px;background:#efefef;"></div><div class="t" style="left:15.39px;top:108.200px;font-size:7.6px;line-height:7.6px;color:#525252;transform:scaleX(0.8428);transform-origin:0 0;">E BUS-05</div><div class="t" style="left:72.96px;top:108.200px;font-size:7.6px;line-height:7.6px;color:#525252;transform:scaleX(0.8762);transform-origin:0 0;">OP-0015</div><div style="position:absolute;left:116.60px;top:106.94px;width:303.10px;height:9.60px;background:#ebebeb;border-radius:2px;"></div><div style="position:absolute;left:116.60px;top:106.94px;width:14.59px;height:9.60px;background:#e3b200;border-radius:2px;"></div><div class="t" style="left:479.42px;top:109.200px;font-size:6.4px;line-height:6.4px;color:#e2b62c;transform:scaleX(1.0245);transform-origin:0 0;">hrs</div><div class="t" style="left:464.13px;top:108.200px;font-size:7.2px;line-height:7.2px;color:#e2b62c;transform:scaleX(1.0310);transform-origin:0 0;-webkit-text-stroke:0.12px #e2b62c;">4.11</div></div><div style="position:absolute;left:499.20px;top:38.30px;width:2.70px;height:22.30px;background:#d6d7d7;"></div>
</div>
</body></html>
